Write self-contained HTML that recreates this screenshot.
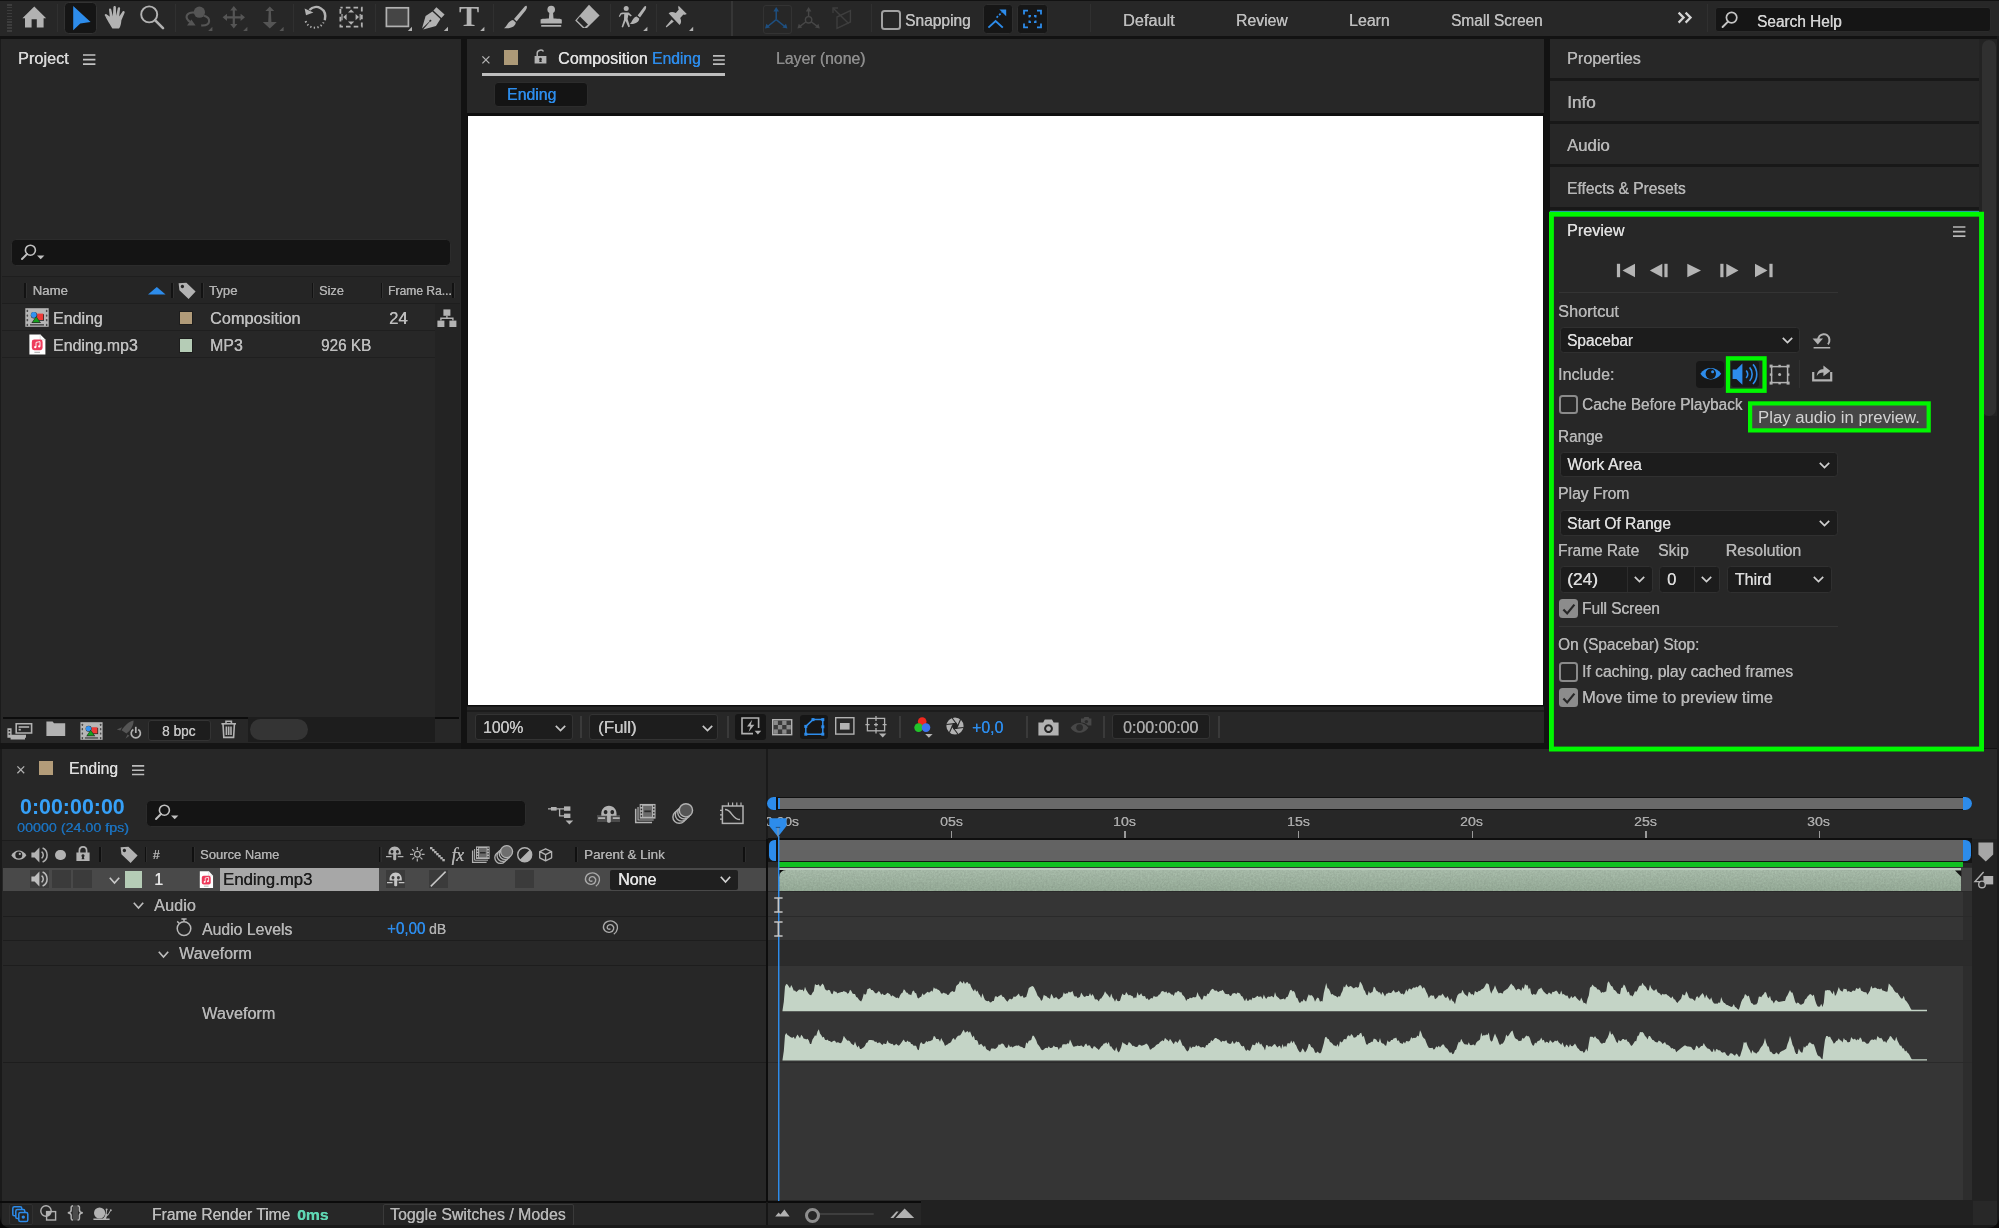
<!DOCTYPE html>
<html><head><meta charset="utf-8"><title>After Effects - Ending</title>
<style>
html,body{margin:0;padding:0;background:#272727;}
body{width:1999px;height:1228px;position:relative;overflow:hidden;font-family:"Liberation Sans",sans-serif;}
div,span.t,svg{position:absolute;box-sizing:border-box;}
span.t{white-space:pre;text-shadow:0.35px 0 0 currentColor;}
svg{overflow:visible;}
#root{left:0;top:0;width:1999px;height:1228px;will-change:transform;}
</style></head><body><div id="root">
<div style="left:0px;top:0px;width:1999px;height:1228px;background:#121212;"></div>
<div style="left:0px;top:1px;width:1999px;height:35px;background:#272727;"></div>
<div style="left:1px;top:39px;width:460px;height:704px;background:#272727;"></div>
<div style="left:467px;top:39px;width:1077px;height:704px;background:#272727;"></div>
<div style="left:1550px;top:39px;width:449px;height:709px;background:#272727;"></div>
<div style="left:0px;top:749px;width:1999px;height:479px;background:#272727;"></div>
<div style="left:1979px;top:39px;width:20px;height:709px;background:#232323;"></div>
<div style="left:1982px;top:40px;width:13.5px;height:376px;background:#303030;border-radius:7px;"></div>
<div style="left:1984px;top:416px;width:15px;height:332px;background:#1e1e1e;"></div>
<div style="left:1550px;top:78px;width:429px;height:3px;background:#181818;"></div>
<div style="left:1550px;top:121px;width:429px;height:3px;background:#181818;"></div>
<div style="left:1550px;top:164px;width:429px;height:3px;background:#181818;"></div>
<div style="left:1550px;top:207px;width:429px;height:3px;background:#181818;"></div>
<div style="left:467px;top:113px;width:1077px;height:594px;background:#0e0e0e;"></div>
<div style="left:468px;top:116px;width:1075px;height:589px;background:#ffffff;"></div>
<div style="left:7px;top:4px;width:5px;height:1.6px;background:#3d3d3d;"></div>
<div style="left:7px;top:6.9px;width:5px;height:1.6px;background:#3d3d3d;"></div>
<div style="left:7px;top:9.8px;width:5px;height:1.6px;background:#3d3d3d;"></div>
<div style="left:7px;top:12.7px;width:5px;height:1.6px;background:#3d3d3d;"></div>
<div style="left:7px;top:15.6px;width:5px;height:1.6px;background:#3d3d3d;"></div>
<div style="left:7px;top:18.5px;width:5px;height:1.6px;background:#3d3d3d;"></div>
<div style="left:7px;top:21.4px;width:5px;height:1.6px;background:#3d3d3d;"></div>
<div style="left:7px;top:24.3px;width:5px;height:1.6px;background:#3d3d3d;"></div>
<div style="left:7px;top:27.2px;width:5px;height:1.6px;background:#3d3d3d;"></div>
<div style="left:7px;top:30.1px;width:5px;height:1.6px;background:#3d3d3d;"></div>
<div style="left:57px;top:4px;width:1px;height:28px;background:#303030;"></div>
<div style="left:175px;top:4px;width:1px;height:28px;background:#303030;"></div>
<div style="left:292.5px;top:4px;width:1px;height:28px;background:#303030;"></div>
<div style="left:374.5px;top:4px;width:1px;height:28px;background:#303030;"></div>
<div style="left:492.5px;top:4px;width:1px;height:28px;background:#303030;"></div>
<div style="left:609.5px;top:4px;width:1px;height:28px;background:#303030;"></div>
<div style="left:655.5px;top:4px;width:1px;height:28px;background:#303030;"></div>
<div style="left:871px;top:4px;width:1px;height:28px;background:#303030;"></div>
<div style="left:1090px;top:4px;width:1px;height:28px;background:#303030;"></div>
<div style="left:1707px;top:4px;width:1px;height:28px;background:#303030;"></div>
<div style="left:730.5px;top:1px;width:2.2px;height:35px;background:#363636;"></div>
<svg style="left:22px;top:5px;" width="25" height="24" viewBox="0 0 25 24"><path d="M12.3 1.6 L24.2 13.2 H21.6 V22.6 H14.8 V14.2 H9.6 V22.6 H3 V13.2 H0.4 Z" fill="#b2b2b2"/></svg>
<div style="left:63.6px;top:1.9px;width:33.4px;height:31.8px;background:#151515;border:1px solid #323232;border-radius:4.5px;"></div>
<svg style="left:64px;top:0px;" width="32" height="36" viewBox="0 0 32 36"><path d="M9.2 5.9 L26.6 22 L16.3 23.6 L9.2 30.3 Z" fill="#2d8ceb"/></svg>
<svg style="left:104px;top:5px;" width="24" height="25" viewBox="0 0 24 25"><g fill="#b2b2b2"><path d="M5.6 14.6 L1 10.8 C0.2 10 1.4 8.6 2.4 9.3 L7.2 12.6 Z"/>
<path d="M6.2 15.6 L5 4.6 C4.9 3.2 7 3 7.3 4.4 L8.8 11.2 L9.4 2.2 C9.5 0.6 11.8 0.6 11.9 2.2 L12.2 10.8 L13.8 3 C14.1 1.6 16.3 2 16.1 3.5 L15.2 11.6 L18.6 6.6 C19.4 5.4 21.2 6.5 20.6 7.8 L17.4 15.2 C17 19 16.6 21.6 15 23.6 H8.4 C7.4 21.6 4.6 17.8 1.2 11 L6 13.6 Z"/></g></svg>
<svg style="left:139px;top:4px;" width="26" height="26" viewBox="0 0 26 26"><circle cx="10.2" cy="10.4" r="8" fill="none" stroke="#b2b2b2" stroke-width="1.9"/><path d="M16 16.2 L24 24.2" stroke="#b2b2b2" stroke-width="2.6" stroke-linecap="round"/></svg>
<svg style="left:184px;top:5px;" width="30" height="28" viewBox="0 0 30 28"><circle cx="15.4" cy="7.2" r="5.6" fill="#555555"/>
<path d="M10.5 7.6 C3.5 6.6 0.6 11.6 4.2 15.4 L6 17" fill="none" stroke="#555555" stroke-width="2.1"/>
<path d="M3 20.4 L11.6 20.4 L7.4 14.4 Z" fill="#555555"/>
<path d="M19.6 10.6 C27.4 13 27.2 21 17.2 20.4" fill="none" stroke="#555555" stroke-width="2.1"/><path d="M28.4 21.8V26H24.2Z" fill="#555555"/></svg>
<svg style="left:222px;top:5px;" width="26" height="28" viewBox="0 0 26 28"><g fill="#555555"><path d="M11.8 1 L15.4 5.6 H12.9 V11.2 H18.6 V8.7 L23 12.3 L18.6 15.9 V13.4 H12.9 V19 H15.4 L11.8 23.6 L8.2 19 H10.7 V13.4 H5 V15.9 L0.6 12.3 L5 8.7 V11.2 H10.7 V5.6 H8.2 Z"/></g><path d="M25.4 21.8V26H21.2Z" fill="#555555"/></svg>
<svg style="left:260px;top:5px;" width="24" height="28" viewBox="0 0 24 28"><g fill="#555555"><path d="M9.8 1.6 L14.2 6 H10.9 L11.4 17 H16.8 L9.8 23.4 L2.8 17 H8.2 L8.7 6 H5.4 Z"/></g><path d="M23.6 21.8V26H19.400000000000002Z" fill="#555555"/></svg>
<svg style="left:303px;top:4px;" width="26" height="27" viewBox="0 0 26 27"><path d="M6.4 6 C13 -0.6 24.6 4.4 21.8 16.2" fill="none" stroke="#b2b2b2" stroke-width="2.4"/>
<path d="M1.6 4.4 L10.4 8.6 L3 11.2 Z" fill="#b2b2b2"/>
<path d="M2.6 17.2 C5.4 25.2 16.6 26 20.6 18.4" fill="none" stroke="#b2b2b2" stroke-width="2" stroke-dasharray="1.3 2.3"/></svg>
<svg style="left:339px;top:6px;" width="25" height="23" viewBox="0 0 25 23"><rect x="1.4" y="1.6" width="21.4" height="19" fill="none" stroke="#b2b2b2" stroke-width="1.8" stroke-dasharray="4.6 3.1" stroke-dashoffset="2.3"/>
<g fill="#b2b2b2"><path d="M12.1 3.4 L15.2 6.6 H9 Z"/><path d="M12.1 18.8 L15.2 15.6 H9 Z"/>
<path d="M2.4 8 H3.6 V14.2 H2.4 Z M4.2 11.1 L7.6 8 V14.2 Z"/><path d="M21.8 8 H20.6 V14.2 H21.8 Z M20 11.1 L16.6 8 V14.2 Z"/></g></svg>
<svg style="left:385px;top:6px;" width="28" height="26" viewBox="0 0 28 26"><rect x="1.4" y="1.8" width="22" height="18.6" fill="#454545" stroke="#b2b2b2" stroke-width="1.7"/><path d="M27 20.8V25H22.8Z" fill="#b2b2b2"/></svg>
<svg style="left:421px;top:5px;" width="28" height="28" viewBox="0 0 28 28"><g fill="#b2b2b2"><path d="M15.4 2.2 L23.6 9.6 L20.4 13 L12.4 5.6 Z"/>
<path d="M11.4 6.6 L19.4 14 L15 21 L2.2 24.4 L9 16.6 C10.2 17 11 15.4 9.8 14.8 C8.6 14.4 8 16 8.4 16.4 L1 23.4 L4.6 11 Z"/></g><path d="M27 21.8V26H22.8Z" fill="#b2b2b2"/></svg>
<span class="t" style="left:458.6px;top:0.2px;font-family:'Liberation Serif',serif;font-weight:bold;font-size:28.6px;line-height:34px;color:#b2b2b2;transform:scaleX(1.06);transform-origin:0 0;text-shadow:none;">T</span>
<svg style="left:458px;top:6px;" width="27" height="27" viewBox="0 0 27 27"><path d="M26.4 20.8V25H22.2Z" fill="#b2b2b2"/></svg>
<svg style="left:503px;top:5px;" width="26" height="25" viewBox="0 0 26 25"><g fill="#b2b2b2"><path d="M23.4 0.8 C24.4 1.6 24 3.4 22.6 5.6 L13.6 16.4 L11 14 L20 3.4 C21.4 1.8 22.6 0.4 23.4 0.8 Z"/>
<path d="M10 15 L12.8 17.6 C12.4 21.6 8 24 1 23.2 C4.4 21.4 4.2 16.4 10 15 Z"/></g></svg>
<svg style="left:539px;top:5px;" width="25" height="24" viewBox="0 0 25 24"><g fill="#b2b2b2"><circle cx="12.2" cy="4.6" r="3.8"/><path d="M10.4 7 H14 L14.6 14.4 H9.8 Z"/>
<path d="M1.6 14.6 C4 13.4 8 13.8 10 13.6 H14.4 C16.4 13.8 20.4 13.4 22.8 14.6 V18.6 H1.6 Z"/><rect x="2.2" y="20" width="20" height="1.7"/></g></svg>
<svg style="left:574px;top:4px;" width="27" height="26" viewBox="0 0 27 26"><path d="M15 0.8 L25.6 11.4 L13 24 H8.8 L1.2 16.4 Z" fill="#b2b2b2"/>
<path d="M6 12.6 L14 20.6 L10.4 23.6 L2.9 16.2 Z" fill="#272727"/></svg>
<svg style="left:618px;top:5px;" width="31" height="28" viewBox="0 0 31 28"><g fill="#b2b2b2"><circle cx="8.2" cy="3.6" r="2.5"/>
<path d="M4.6 7.4 H10.6 L13.8 10.4 L12.8 11.6 L10.4 9.8 L9.6 14 L12 21.6 L10.4 22.2 L7.6 16 L5 22.6 L3.6 22 L6 14.4 L6.2 9 L3.2 9.6 L1.8 12 L0.8 11.2 L2.6 8 Z"/>
<path d="M27.6 1 C28.6 1.6 28.2 3.2 27.4 4.8 L22 12.4 L19.6 10.6 L25.2 3 C26 1.8 27 0.8 27.6 1 Z"/>
<path d="M18.6 11.4 L21.2 13.4 C21.6 16.6 17 19.6 11.6 18.8 C14.8 17 14 12.6 18.6 11.4 Z"/></g><path d="M29.4 21.8V26H25.2Z" fill="#b2b2b2"/></svg>
<svg style="left:665px;top:5px;" width="29" height="28" viewBox="0 0 29 28"><g fill="#b2b2b2"><path d="M13.6 0.8 L21.8 9 C20.4 9.8 19.2 9.8 18.4 9.4 L15.2 13 C16.6 15.6 16.4 18 14.6 20 L3.6 8.2 C5.8 6.6 8.2 6.8 10.8 8 L13.8 4.6 C13.2 3.4 13 2.2 13.6 0.8 Z"/>
<path d="M6.6 14.4 L8.8 16.6 L1.4 22.4 L0.8 21.6 Z"/></g><path d="M28.2 21.8V26H24.0Z" fill="#b2b2b2"/></svg>
<div style="left:762.5px;top:4.5px;width:29.5px;height:29px;border:1px solid #333333;border-radius:3px;"></div>
<svg style="left:762px;top:3px;" width="30" height="32" viewBox="0 0 30 32"><g stroke="#1e4f80" stroke-width="1.5" fill="none"><path d="M14.2 16.6 V7"/><path d="M14.2 16.6 L5 24"/><path d="M14.2 16.6 L23.4 24"/></g>
<g fill="#1e4f80"><path d="M14.2 4 L17 8.4 H11.4 Z"/><path d="M3 25.6 L4.4 20.8 L8 24.6 Z"/><path d="M25.4 25.6 L24 20.8 L20.4 24.6 Z"/></g></svg>
<svg style="left:794px;top:3px;" width="30" height="32" viewBox="0 0 30 32"><g stroke="#474747" stroke-width="1.4" fill="none"><circle cx="14.6" cy="16.8" r="3.2"/><path d="M14.6 13.4 V7"/><path d="M12 18.8 L5.6 23.6"/><path d="M17.2 18.8 L23.6 23.6"/></g>
<g fill="#474747"><path d="M14.6 4 L17.4 8.4 H11.8 Z"/><path d="M3.4 25.4 L4.8 20.8 L8.2 24.4 Z"/><path d="M25.8 25.4 L24.4 20.8 L21 24.4 Z"/></g></svg>
<svg style="left:828px;top:3px;" width="30" height="32" viewBox="0 0 30 32"><g stroke="#3e3e3e" stroke-width="1.4" fill="none"><path d="M9 14 L22.4 7.6 V19 L9 25.4 Z"/><path d="M5.4 5.4 L20.6 20.6"/><path d="M5 10 V5 H10"/></g></svg>
<div style="left:881px;top:10px;width:20px;height:20px;border:2px solid #a2a2a2;border-radius:3.5px;"></div>
<span class="t" style="left:905.04px;top:10.68px;font-size:16px;line-height:20px;color:#c0c0c0;transform:scaleX(0.9701);transform-origin:0 0;">Snapping</span>
<div style="left:982.6px;top:3.8px;width:30.8px;height:30.6px;background:#161616;border:1px solid #2e2e2e;border-radius:3.5px;"></div>
<svg style="left:983px;top:4px;" width="30" height="30" viewBox="0 0 30 30"><path d="M5.4 23.6 L12.6 17 L19.8 23.6" fill="none" stroke="#2d8ceb" stroke-width="1.9"/>
<path d="M13.6 13.6 L19 8.2" stroke="#2d8ceb" stroke-width="1.7" stroke-dasharray="2 1.6"/><path d="M16.4 5.4 H23.2 V12.2 Z" fill="#2d8ceb"/></svg>
<div style="left:1016.8px;top:3.8px;width:30.8px;height:30.6px;background:#161616;border:1px solid #2e2e2e;border-radius:3.5px;"></div>
<svg style="left:1017px;top:4px;" width="30" height="30" viewBox="0 0 30 30"><g fill="none" stroke="#2d8ceb" stroke-width="1.8"><path d="M7 10.6 V6.6 H11"/><path d="M24 10.6 V6.6 H20"/><path d="M7 19.4 V23.4 H11"/><path d="M24 19.4 V23.4 H20"/>
<path d="M12.4 13.4 V11.8 H14"/><path d="M18.6 13.4 V11.8 H17"/><path d="M12.4 16.6 V18.2 H14"/><path d="M18.6 16.6 V18.2 H17"/></g></svg>
<span class="t" style="left:1123.04px;top:10.68px;font-size:16px;line-height:20px;color:#bdbdbd;transform:scaleX(1.0178);transform-origin:0 0;">Default</span>
<span class="t" style="left:1236.04px;top:10.68px;font-size:16px;line-height:20px;color:#bdbdbd;transform:scaleX(0.9836);transform-origin:0 0;">Review</span>
<span class="t" style="left:1349.04px;top:10.68px;font-size:16px;line-height:20px;color:#bdbdbd;transform:scaleX(0.9921);transform-origin:0 0;">Learn</span>
<span class="t" style="left:1451.04px;top:10.68px;font-size:16px;line-height:20px;color:#bdbdbd;transform:scaleX(0.9627);transform-origin:0 0;">Small Screen</span>
<svg style="left:1677px;top:11px;" width="18" height="14" viewBox="0 0 18 14"><path d="M1.6 1.6 L6.6 6.6 L1.6 11.6 M8.6 1.6 L13.6 6.6 L8.6 11.6" fill="none" stroke="#d4d4d4" stroke-width="2.2"/></svg>
<div style="left:1714.5px;top:6.5px;width:276px;height:25px;background:#151515;border-radius:3px;border:1px solid #2a2a2a;"></div>
<svg style="left:1721px;top:11px;" width="18" height="18" viewBox="0 0 18 18"><circle cx="10.6" cy="6.6" r="5.2" fill="none" stroke="#c4c4c4" stroke-width="1.7"/><path d="M7 10.6 L1.6 16" stroke="#c4c4c4" stroke-width="2" stroke-linecap="round"/></svg>
<span class="t" style="left:1757.04px;top:11.68px;font-size:16px;line-height:20px;color:#d2d2d2;transform:scaleX(0.9608);transform-origin:0 0;">Search Help</span>
<div style="left:0px;top:39px;width:1.2px;height:704px;background:#1b1b1b;"></div>
<span class="t" style="left:18.04px;top:49.18px;font-size:16px;line-height:20px;color:#d9d9d9;transform:scaleX(1.0161);transform-origin:0 0;">Project</span>
<svg style="left:83px;top:54px;" width="13" height="12" viewBox="0 0 13 12"><path d="M0 1 H12.4 M0 5.6 H12.4 M0 10.2 H12.4" stroke="#c2c2c2" stroke-width="1.7" fill="none"/></svg>
<div style="left:10.8px;top:238.6px;width:440.4px;height:27.8px;background:#141414;border-radius:4.5px;border:1px solid #2c2c2c;"></div>
<svg style="left:20.7px;top:243.8px;" width="25" height="17" viewBox="0 0 25 17"><circle cx="9.4" cy="6.2" r="5" fill="none" stroke="#c0c0c0" stroke-width="1.6"/><path d="M6 10 L1 15" stroke="#c0c0c0" stroke-width="1.9" stroke-linecap="round"/><path d="M16 11.6 H23.4 L19.7 15.2 Z" fill="#c0c0c0"/></svg>
<div style="left:2px;top:276.5px;width:458px;height:27px;background:#252525;"></div>
<div style="left:2px;top:276px;width:458px;height:1px;background:#1e1e1e;"></div>
<div style="left:2px;top:303px;width:458px;height:1px;background:#1e1e1e;"></div>
<div style="left:24px;top:283px;width:1.6px;height:15px;background:#121212;"></div>
<div style="left:25.6px;top:283px;width:1px;height:15px;background:#303030;"></div>
<div style="left:171px;top:283px;width:1.6px;height:15px;background:#121212;"></div>
<div style="left:172.6px;top:283px;width:1px;height:15px;background:#303030;"></div>
<div style="left:201px;top:283px;width:1.6px;height:15px;background:#121212;"></div>
<div style="left:202.6px;top:283px;width:1px;height:15px;background:#303030;"></div>
<div style="left:311.5px;top:283px;width:1.6px;height:15px;background:#121212;"></div>
<div style="left:313.1px;top:283px;width:1px;height:15px;background:#303030;"></div>
<div style="left:380.5px;top:283px;width:1.6px;height:15px;background:#121212;"></div>
<div style="left:382.1px;top:283px;width:1px;height:15px;background:#303030;"></div>
<div style="left:452px;top:283px;width:1.6px;height:15px;background:#121212;"></div>
<div style="left:453.6px;top:283px;width:1px;height:15px;background:#303030;"></div>
<span class="t" style="left:32.608px;top:281.35px;font-size:13.2px;line-height:20px;color:#b0b0b0;">Name</span>
<svg style="left:147.5px;top:287px;" width="18" height="8" viewBox="0 0 18 8"><path d="M0 7.6 L8.8 0 L17.6 7.6 Z" fill="#2d8ceb"/></svg>
<svg style="left:178px;top:281.5px;" width="18" height="18" viewBox="0 0 18 18"><path d="M0.6 1.2 L1.4 8.2 L10.6 17 L17.6 9.6 L8.4 0.8 Z M4.4 2.8 A1.7 1.7 0 1 1 4.39 2.8 Z" fill="#b2b2b2" fill-rule="evenodd"/></svg>
<span class="t" style="left:209.208px;top:281.35px;font-size:13.2px;line-height:20px;color:#b0b0b0;transform:scaleX(0.9896);transform-origin:0 0;">Type</span>
<span class="t" style="left:319.008px;top:281.35px;font-size:13.2px;line-height:20px;color:#b0b0b0;transform:scaleX(0.9626);transform-origin:0 0;">Size</span>
<span class="t" style="left:388.208px;top:281.35px;font-size:13.2px;line-height:20px;color:#b0b0b0;transform:scaleX(0.9144);transform-origin:0 0;">Frame Ra...</span>
<div style="left:2px;top:330px;width:433px;height:1px;background:#1f1f1f;"></div>
<div style="left:2px;top:357px;width:433px;height:1px;background:#1f1f1f;"></div>
<div style="left:434.6px;top:304px;width:25px;height:413.4px;background:#232323;"></div>
<svg style="left:25.3px;top:308.3px;" width="24" height="19" viewBox="0 0 24 19"><rect x="0.3" y="0.2" width="23.4" height="18.6" fill="#b6b6b6"/><rect x="1.6" y="1.8" width="1.5" height="2.3" rx="0.6" fill="#4a4a4a"/><rect x="20.9" y="1.8" width="1.5" height="2.3" rx="0.6" fill="#4a4a4a"/><rect x="1.6" y="6.4" width="1.5" height="2.3" rx="0.6" fill="#4a4a4a"/><rect x="20.9" y="6.4" width="1.5" height="2.3" rx="0.6" fill="#4a4a4a"/><rect x="1.6" y="11" width="1.5" height="2.3" rx="0.6" fill="#4a4a4a"/><rect x="20.9" y="11" width="1.5" height="2.3" rx="0.6" fill="#4a4a4a"/><rect x="1.6" y="15.8" width="1.5" height="2.3" rx="0.6" fill="#4a4a4a"/><rect x="20.9" y="15.8" width="1.5" height="2.3" rx="0.6" fill="#4a4a4a"/><rect x="5" y="16.2" width="14" height="1.3" fill="#3c3c3c"/><rect x="12.6" y="6.2" width="6.4" height="6.6" fill="#2a2a2a"/><rect x="12.2" y="5.6" width="6" height="6.4" fill="#ee3a36"/><circle cx="9" cy="7.2" r="3.2" fill="#2a2a2a"/><circle cx="8.8" cy="6.9" r="2.8" fill="#3292f0"/><path d="M11.2 8.2 L16 15 H6.4 Z" fill="#2a2a2a"/><path d="M11.2 9 L14.8 14.2 H7.6 Z" fill="#17a11f"/></svg>
<span class="t" style="left:52.94px;top:308.58px;font-size:16px;line-height:20px;color:#c0c0c0;transform:scaleX(0.9955);transform-origin:0 0;">Ending</span>
<div style="left:178.5px;top:310.5px;width:14.5px;height:14.5px;background:#b19b79;border:1px solid #1d1d1d;"></div>
<span class="t" style="left:210.04px;top:308.58px;font-size:16px;line-height:20px;color:#bebebe;transform:scaleX(1.0165);transform-origin:0 0;">Composition</span>
<span class="t" style="left:389.04px;top:308.58px;font-size:16px;line-height:20px;color:#bebebe;transform:scaleX(1.0451);transform-origin:0 0;">24</span>
<svg style="left:437px;top:308.5px;" width="20" height="19" viewBox="0 0 20 19"><g fill="#b2b2b2"><rect x="6.4" y="0.4" width="7" height="6.4"/><rect x="0.4" y="11.6" width="7" height="6.4"/><rect x="12.4" y="11.6" width="7" height="6.4"/><path d="M9.2 6.8 H10.6 V8.6 H16.6 V11.6 H15.2 V10 H4.6 V11.6 H3.2 V8.6 H9.2 Z"/></g></svg>
<svg style="left:28.6px;top:334px;" width="17" height="21" viewBox="0 0 17 21"><path d="M0.4 0.4 H11.4 L16.4 5.6 V20.6 H0.4 Z" fill="#ffffff"/><path d="M11.2 0.6 V5.8 H16.2" fill="none" stroke="#d0d0d0" stroke-width="0.7"/><rect x="2.8" y="5.6" width="10.8" height="10.6" rx="2.4" fill="#ee3b5b"/><path d="M7 13.2 V8.4 L11 7.6 V12.4" fill="none" stroke="#fff" stroke-width="0.9"/><circle cx="6.2" cy="13.2" r="1.1" fill="#fff"/><circle cx="10.2" cy="12.4" r="1.1" fill="#fff"/><rect x="5.4" y="17.8" width="5.6" height="0.9" fill="#999"/></svg>
<span class="t" style="left:52.94px;top:336.18px;font-size:16px;line-height:20px;color:#c0c0c0;transform:scaleX(0.9907);transform-origin:0 0;">Ending.mp3</span>
<div style="left:178.5px;top:338px;width:14.5px;height:14.5px;background:#b5ccb6;border:1px solid #1d1d1d;"></div>
<span class="t" style="left:210.04px;top:336.18px;font-size:16px;line-height:20px;color:#bebebe;transform:scaleX(0.9909);transform-origin:0 0;">MP3</span>
<span class="t" style="left:320.64px;top:336.18px;font-size:16px;line-height:20px;color:#bebebe;transform:scaleX(0.9564);transform-origin:0 0;">926 KB</span>
<div style="left:3px;top:717.3px;width:245px;height:1.6px;background:#0c0c0c;"></div>
<div style="left:434.6px;top:717.3px;width:24.6px;height:1.6px;background:#0c0c0c;"></div>
<div style="left:248px;top:717.4px;width:186.6px;height:24.2px;background:#1d1d1d;"></div>
<div style="left:0px;top:743px;width:461px;height:6px;background:#151515;"></div>
<svg style="left:6.5px;top:722.5px;" width="26" height="17" viewBox="0 0 26 17"><g fill="#b2b2b2"><path d="M8.4 0 H25.4 V10.8 H8.4 Z M10 1.6 V9.2 H23.8 V1.6 Z" fill-rule="evenodd"/><rect x="11.6" y="3.2" width="10.6" height="1.6"/><rect x="11.6" y="5.8" width="2.2" height="1.8"/><path d="M0.4 5.2 H4.6 V11.8 H19 V14.8 H18 V16.4 H3.6 V14.8 H0.4 Z M1.6 7 V8.6 H3.2 V7 Z M1.6 10.2 V11.8 H3.2 V10.2 Z" fill-rule="evenodd"/></g></svg>
<svg style="left:45.5px;top:721px;" width="20" height="16" viewBox="0 0 20 16"><path d="M0.4 0.6 H6.6 L8 2.2 H19.2 V15 H0.4 Z" fill="#b2b2b2"/></svg>
<svg style="left:78.8px;top:721.6px;" width="25" height="18" viewBox="0 0 24 19"><rect x="0.3" y="0.2" width="23.4" height="18.6" fill="#b6b6b6"/><rect x="1.6" y="1.8" width="1.5" height="2.3" rx="0.6" fill="#4a4a4a"/><rect x="20.9" y="1.8" width="1.5" height="2.3" rx="0.6" fill="#4a4a4a"/><rect x="1.6" y="6.4" width="1.5" height="2.3" rx="0.6" fill="#4a4a4a"/><rect x="20.9" y="6.4" width="1.5" height="2.3" rx="0.6" fill="#4a4a4a"/><rect x="1.6" y="11" width="1.5" height="2.3" rx="0.6" fill="#4a4a4a"/><rect x="20.9" y="11" width="1.5" height="2.3" rx="0.6" fill="#4a4a4a"/><rect x="1.6" y="15.8" width="1.5" height="2.3" rx="0.6" fill="#4a4a4a"/><rect x="20.9" y="15.8" width="1.5" height="2.3" rx="0.6" fill="#4a4a4a"/><rect x="5" y="16.2" width="14" height="1.3" fill="#3c3c3c"/><rect x="12.6" y="6.2" width="6.4" height="6.6" fill="#2a2a2a"/><rect x="12.2" y="5.6" width="6" height="6.4" fill="#ee3a36"/><circle cx="9" cy="7.2" r="3.2" fill="#2a2a2a"/><circle cx="8.8" cy="6.9" r="2.8" fill="#3292f0"/><path d="M11.2 8.2 L16 15 H6.4 Z" fill="#2a2a2a"/><path d="M11.2 9 L14.8 14.2 H7.6 Z" fill="#17a11f"/></svg>
<svg style="left:116px;top:720px;" width="26" height="20" viewBox="0 0 26 20"><g fill="#555"><path d="M17.6 0.4 C13 1.6 8.4 5.4 5.6 10.2 L10.4 13.6 C14.6 10.2 17.6 5.6 17.6 0.4 Z"/><path d="M6 7.2 L0.8 9.4 L4.4 10.4 Z"/><path d="M11.6 14.6 L9.4 18.8 L13.4 15.8 Z"/></g><g fill="none" stroke="#b2b2b2" stroke-width="1.7"><path d="M17.4 9.4 A4.6 4.6 0 1 0 22.2 9.4"/><path d="M19.8 6.8 V13"/></g></svg>
<div style="left:147.5px;top:720px;width:63.5px;height:21px;background:#1d1d1d;border:1px solid #333;border-radius:3px;"></div>
<span class="t" style="left:162.46px;top:721.36px;font-size:14px;line-height:20px;color:#c2c2c2;transform:scaleX(0.9752);transform-origin:0 0;">8 bpc</span>
<svg style="left:221px;top:720px;" width="16" height="19" viewBox="0 0 16 19"><g fill="none" stroke="#b2b2b2" stroke-width="1.6"><path d="M0.4 3.8 H15"/><path d="M5 3.4 V1.2 H10.4 V3.4"/><path d="M2 4 L2.8 17.4 H12.6 L13.4 4"/><path d="M5.4 6.4 V15 M7.7 6.4 V15 M10 6.4 V15"/></g></svg>
<div style="left:250px;top:719px;width:58.4px;height:21.4px;background:#343434;border-radius:11px;"></div>
<svg style="left:482px;top:55.5px;" width="8" height="8" viewBox="0 0 8 8"><path d="M0.4 0.4 L7.4 7.4 M7.4 0.4 L0.4 7.4" stroke="#b4b4b4" stroke-width="1.3"/></svg>
<div style="left:503.7px;top:50.2px;width:14.5px;height:14.5px;background:#ad9a78;"></div>
<svg style="left:533.5px;top:48.5px;" width="13" height="15" viewBox="0 0 13 15"><path d="M3.2 7.4 V4.2 C3.2 0.6 8.6 0.2 9.4 2.6" fill="none" stroke="#b2b2b2" stroke-width="1.5"/><path d="M0.6 7 H12.4 V14.6 H0.6 Z M6.5 8.8 A1.5 1.5 0 0 0 5.6 11.4 L5.2 13 H7.8 L7.4 11.4 A1.5 1.5 0 0 0 6.5 8.8 Z" fill="#b2b2b2" fill-rule="evenodd"/></svg>
<span class="t" style="left:557.74px;top:48.88px;font-size:16px;line-height:20px;color:#e2e2e2;transform:scaleX(1.0075);transform-origin:0 0;">Composition</span>
<span class="t" style="left:651.74px;top:48.88px;font-size:16px;line-height:20px;color:#2d8ceb;transform:scaleX(0.9755);transform-origin:0 0;">Ending</span>
<svg style="left:713px;top:54.8px;" width="12" height="11" viewBox="0 0 12 11"><path d="M0 0.9 H11.8 M0 5 H11.8 M0 9.1 H11.8" stroke="#bcbcbc" stroke-width="1.6" fill="none"/></svg>
<div style="left:482px;top:73.2px;width:243px;height:2.8px;background:#bebebe;"></div>
<span class="t" style="left:776.24px;top:48.88px;font-size:16px;line-height:20px;color:#8c8c8c;transform:scaleX(0.9843);transform-origin:0 0;">Layer (none)</span>
<div style="left:494.2px;top:82.2px;width:93.4px;height:25px;background:#141414;border-radius:4px;border:1px solid #2c2c2c;"></div>
<span class="t" style="left:507.04px;top:84.68px;font-size:16px;line-height:20px;color:#2d8ceb;transform:scaleX(0.9875);transform-origin:0 0;">Ending</span>
<div style="left:467px;top:705.6px;width:1077px;height:1.2px;background:#1a1a1a;"></div>
<div style="left:467px;top:710.4px;width:1077px;height:1.3px;background:#1c1c1c;"></div>
<div style="left:580.3px;top:715.5px;width:2px;height:22px;background:#3a3a3a;"></div>
<div style="left:727.3px;top:715.5px;width:2px;height:22px;background:#3a3a3a;"></div>
<div style="left:899px;top:715.5px;width:2px;height:22px;background:#3a3a3a;"></div>
<div style="left:1026px;top:715.5px;width:2px;height:22px;background:#3a3a3a;"></div>
<div style="left:1103.3px;top:715.5px;width:2px;height:22px;background:#3a3a3a;"></div>
<div style="left:1218px;top:715.5px;width:2px;height:22px;background:#3a3a3a;"></div>
<div style="left:474.7px;top:714.3px;width:98px;height:25.3px;background:#1d1d1d;border:1px solid #333;border-radius:3px;"></div>
<span class="t" style="left:483.44px;top:717.68px;font-size:16px;line-height:20px;color:#c6c6c6;transform:scaleX(0.9823);transform-origin:0 0;">100%</span>
<svg style="left:554.5px;top:724.5px;" width="12" height="7" viewBox="0 0 12 7"><path d="M0.8 0.8 L5.5 5.5 L10.2 0.8" fill="none" stroke="#c6c6c6" stroke-width="1.7"/></svg>
<div style="left:589.4px;top:714.3px;width:129px;height:25.3px;background:#1d1d1d;border:1px solid #333;border-radius:3px;"></div>
<span class="t" style="left:597.74px;top:717.68px;font-size:16px;line-height:20px;color:#c6c6c6;transform:scaleX(1.0565);transform-origin:0 0;">(Full)</span>
<svg style="left:701.5px;top:724.5px;" width="12" height="7" viewBox="0 0 12 7"><path d="M0.8 0.8 L5.5 5.5 L10.2 0.8" fill="none" stroke="#c6c6c6" stroke-width="1.7"/></svg>
<div style="left:735.2px;top:713.7px;width:30.6px;height:26.1px;background:#161616;border-radius:3px;"></div>
<svg style="left:740.5px;top:717px;" width="21" height="19" viewBox="0 0 21 19"><path d="M17.6 11 V1 H1 V16.6 H12" fill="none" stroke="#b2b2b2" stroke-width="1.6"/><path d="M11.2 2.8 L6 9.6 H9.4 L7.6 15 L13.4 7.8 H9.8 Z" fill="#b2b2b2"/><path d="M13.6 13.8 H20.2 L16.9 17.4 Z" fill="#b2b2b2"/></svg>
<svg style="left:771.8px;top:718.8px;" width="21" height="17" viewBox="0 0 21 17"><rect x="0.7" y="0.7" width="19" height="15" fill="#3a3a3a" stroke="#b2b2b2" stroke-width="1.4"/><rect x="1.6" y="1.6" width="4.3" height="4.4" fill="#8a8a8a"/><rect x="10.2" y="1.6" width="4.3" height="4.4" fill="#8a8a8a"/><rect x="5.9" y="6" width="4.3" height="4.4" fill="#8a8a8a"/><rect x="14.5" y="6" width="4.3" height="4.4" fill="#8a8a8a"/><rect x="1.6" y="10.4" width="4.3" height="4.4" fill="#8a8a8a"/><rect x="10.2" y="10.4" width="4.3" height="4.4" fill="#8a8a8a"/></svg>
<div style="left:799.6px;top:714.8px;width:28.2px;height:24px;background:#161616;border-radius:3px;"></div>
<svg style="left:803.6px;top:717.6px;" width="21" height="18" viewBox="0 0 21 18"><path d="M1.8 16.2 V8.4 L9 1.6 H18.8 V16.2 Z" fill="none" stroke="#2d8ceb" stroke-width="1.5"/><rect x="0.3" y="14.7" width="3" height="3" fill="#2d8ceb"/><rect x="0.3" y="6.9" width="3" height="3" fill="#2d8ceb"/><rect x="7.5" y="0.1" width="3" height="3" fill="#2d8ceb"/><rect x="17.3" y="0.1" width="3" height="3" fill="#2d8ceb"/><rect x="17.3" y="7.3" width="3" height="3" fill="#2d8ceb"/><rect x="17.3" y="14.7" width="3" height="3" fill="#2d8ceb"/></svg>
<svg style="left:835.3px;top:717.3px;" width="20" height="18" viewBox="0 0 20 18"><rect x="0.7" y="0.7" width="18.2" height="16.4" fill="none" stroke="#b2b2b2" stroke-width="1.4"/><rect x="5" y="6" width="9.6" height="6.6" fill="#b2b2b2"/></svg>
<svg style="left:865px;top:716px;" width="23" height="22" viewBox="0 0 23 22"><g fill="none" stroke="#b2b2b2" stroke-width="1.3"><rect x="2.4" y="2.4" width="17.2" height="12.4"/><path d="M11 0 V5 M11 12 V17.6 M0.4 8.6 H4.6 M17.6 8.6 H21.6 M9 8.6 H13 M11 6.8 V10.4"/></g><path d="M14 17.6 H21.4 L17.7 21.4 Z" fill="#b2b2b2"/></svg>
<svg style="left:913.5px;top:716.6px;" width="20" height="22" viewBox="0 0 20 22"><circle cx="8.2" cy="4.6" r="4.3" fill="#f0281e"/><circle cx="4.6" cy="10.6" r="4.3" fill="#22c32a"/><circle cx="12" cy="10.6" r="4.3" fill="#3d74ee"/><path d="M11.2 17 H18.6 L14.9 20.8 Z" fill="#b2b2b2"/></svg>
<svg style="left:945.5px;top:717.2px;" width="18" height="18" viewBox="0 0 18 18"><circle cx="9" cy="9" r="8.6" fill="#b2b2b2"/><path d="M17.67 10.53 L7.16 11.62" stroke="#272727" stroke-width="1.1"/><path d="M12.01 17.27 L5.81 8.72" stroke="#272727" stroke-width="1.1"/><path d="M3.34 15.74 L7.65 6.10" stroke="#272727" stroke-width="1.1"/><path d="M0.33 7.47 L10.84 6.38" stroke="#272727" stroke-width="1.1"/><path d="M5.99 0.73 L12.19 9.28" stroke="#272727" stroke-width="1.1"/><path d="M14.66 2.26 L10.35 11.90" stroke="#272727" stroke-width="1.1"/><circle cx="9" cy="9" r="2.6" fill="#272727"/></svg>
<span class="t" style="left:972.44px;top:718.18px;font-size:16px;line-height:20px;color:#2d8ceb;transform:scaleX(0.9878);transform-origin:0 0;">+0,0</span>
<svg style="left:1038.3px;top:718.6px;" width="21" height="17" viewBox="0 0 21 17"><path d="M0.4 3.4 H5.2 L6.8 0.6 H14 L15.6 3.4 H20.6 V16.4 H0.4 Z M10.5 5.2 A4.4 4.4 0 1 0 10.51 5.2 Z M10.5 7.2 A2.4 2.4 0 1 1 10.49 7.2 Z" fill="#b2b2b2" fill-rule="evenodd"/></svg>
<svg style="left:1069.5px;top:716.2px;" width="22" height="19" viewBox="0 0 22 19"><path d="M0.6 11.8 C4.6 5.4 14 5.4 18.4 11.8 C14 18.4 4.6 18.4 0.6 11.8 Z" fill="#474747"/><circle cx="9.6" cy="11.6" r="3.4" fill="#2b2b2b"/><path d="M11 2.6 H13.6 L14.4 1 H18.6 L19.4 2.6 H21.4 V9.6 H18 C16.4 7.6 13.8 6.4 11 6.4 Z" fill="#474747"/><circle cx="16.4" cy="5.6" r="1.7" fill="#2b2b2b"/></svg>
<div style="left:1111.9px;top:714.3px;width:98.4px;height:25px;background:#1d1d1d;border:1px solid #333;border-radius:3px;"></div>
<span class="t" style="left:1123.34px;top:717.68px;font-size:16px;line-height:20px;color:#a8a8a8;transform:scaleX(0.9944);transform-origin:0 0;">0:00:00:00</span>
<span class="t" style="left:1567.04px;top:49.48px;font-size:16px;line-height:20px;color:#b6b6b6;transform:scaleX(1.0093);transform-origin:0 0;">Properties</span>
<span class="t" style="left:1567.04px;top:92.58px;font-size:16px;line-height:20px;color:#b6b6b6;transform:scaleX(1.0717);transform-origin:0 0;">Info</span>
<span class="t" style="left:1567.04px;top:135.58px;font-size:16px;line-height:20px;color:#b6b6b6;transform:scaleX(1.0410);transform-origin:0 0;">Audio</span>
<span class="t" style="left:1567.04px;top:178.58px;font-size:16px;line-height:20px;color:#b6b6b6;transform:scaleX(0.9688);transform-origin:0 0;">Effects &amp; Presets</span>
<span class="t" style="left:1567.04px;top:221.18px;font-size:16px;line-height:20px;color:#dedede;transform:scaleX(1.0069);transform-origin:0 0;">Preview</span>
<svg style="left:1953px;top:226px;" width="13" height="12" viewBox="0 0 13 12"><path d="M0 1 H12.4 M0 5.6 H12.4 M0 10.2 H12.4" stroke="#b8b8b8" stroke-width="1.7" fill="none"/></svg>
<svg style="left:0;top:0" width="1999" height="300" viewBox="0 0 1999 300"><rect x="1616.9" y="263.8" width="3.2" height="13.4" fill="#b4b4b4"/><path d="M1635 263.8 V277.2 L1622.5 270.5 Z" fill="#b4b4b4"/><path d="M1662.3 263.8 V277.2 L1649.8 270.5 Z" fill="#b4b4b4"/><rect x="1664.4" y="263.8" width="3.2" height="13.4" fill="#b4b4b4"/><path d="M1687.3 263.8 V277.2 L1701 270.5 Z" fill="#b4b4b4"/><rect x="1720.3" y="263.8" width="3.2" height="13.4" fill="#b4b4b4"/><path d="M1726.3 263.8 V277.2 L1738.5 270.5 Z" fill="#b4b4b4"/><path d="M1755 263.8 V277.2 L1767.5 270.5 Z" fill="#b4b4b4"/><rect x="1769.4" y="263.8" width="3.2" height="13.4" fill="#b4b4b4"/></svg>
<div style="left:1558.5px;top:292.2px;width:279.5px;height:1.2px;background:#343434;"></div>
<span class="t" style="left:1557.84px;top:301.58px;font-size:16px;line-height:20px;color:#b6b6b6;transform:scaleX(1.0203);transform-origin:0 0;">Shortcut</span>
<div style="left:1559.5px;top:326.6px;width:240.5px;height:26.4px;background:#1c1c1c;border:1px solid #303030;border-radius:3.5px;"></div>
<span class="t" style="left:1567.24px;top:330.58px;font-size:16px;line-height:20px;color:#dcdcdc;transform:scaleX(0.9621);transform-origin:0 0;">Spacebar</span>
<svg style="left:1781.5px;top:337px;" width="12" height="7" viewBox="0 0 12 7"><path d="M0.8 0.8 L5.5 5.5 L10.2 0.8" fill="none" stroke="#cfcfcf" stroke-width="1.7"/></svg>
<svg style="left:1812px;top:331px;" width="20" height="18" viewBox="0 0 20 18"><path d="M6.4 9.2 C5.6 2 16.6 0.6 17.4 8.6 C17.6 10.6 17 12.2 16 13.4" fill="none" stroke="#b2b2b2" stroke-width="2"/><path d="M0.6 7.6 H11 L5.8 13.6 Z" fill="#b2b2b2"/><rect x="1.6" y="16" width="16.6" height="1.5" fill="#b2b2b2"/></svg>
<span class="t" style="left:1557.84px;top:364.68px;font-size:16px;line-height:20px;color:#b6b6b6;transform:scaleX(1.0046);transform-origin:0 0;">Include:</span>
<div style="left:1696.3px;top:360.6px;width:28px;height:27px;background:#171717;border-radius:4px;"></div>
<svg style="left:1700px;top:366.4px;" width="22" height="16" viewBox="0 0 22 16"><path d="M0.4 7.8 C5 0.2 16.4 0.2 21.2 7.8 C16.4 15.4 5 15.4 0.4 7.8 Z" fill="#2d8ceb"/><circle cx="10.8" cy="7.8" r="5.2" fill="#171717"/><circle cx="12.6" cy="5.8" r="1.5" fill="#2d8ceb"/></svg>
<div style="left:1730.6px;top:361px;width:28.4px;height:25.8px;background:#181818;border-radius:3px;"></div>
<svg style="left:0;top:0" width="1999" height="800" viewBox="0 0 1999 800"><rect x="1728" y="358.35" width="36.55" height="32.4" fill="none" stroke="#00f700" stroke-width="4.3"/></svg>
<svg style="left:1731.5px;top:363.3px;" width="28" height="23" viewBox="0 0 28 23"><path d="M0.6 6.4 H4.4 L10.4 0.6 V21.8 L4.4 16 H0.6 Z" fill="#2d8ceb"/><g fill="none" stroke="#2d8ceb" stroke-width="1.6"><path d="M14.2 7.4 C16 9.6 16 12.8 14.2 15"/><path d="M17.6 4.4 C21 8.2 21 14.2 17.6 18"/><path d="M21 1.4 C26 6.8 26 15.6 21 21"/></g></svg>
<svg style="left:1768.6px;top:363.6px;" width="22" height="22" viewBox="0 0 22 22"><rect x="2.6" y="2.6" width="16" height="16" fill="none" stroke="#b2b2b2" stroke-width="1.5"/><g fill="#b2b2b2"><rect x="0.6" y="0.6" width="3" height="3"/><rect x="17.6" y="0.6" width="3" height="3"/><rect x="0.6" y="17.6" width="3" height="3"/><rect x="17.6" y="17.6" width="3" height="3"/><rect x="9.4" y="0.8" width="2.4" height="2.4"/><rect x="9.4" y="18" width="2.4" height="2.4"/><rect x="0.8" y="9.4" width="2.4" height="2.4"/><rect x="18" y="9.4" width="2.4" height="2.4"/><circle cx="10.6" cy="10.6" r="1.5"/></g></svg>
<div style="left:1799px;top:360px;width:1.2px;height:28px;background:#313131;"></div>
<svg style="left:1812.3px;top:365.2px;" width="21" height="17" viewBox="0 0 21 17"><path d="M1.2 7 V15.4 H19.2 V7" fill="none" stroke="#b2b2b2" stroke-width="2.2"/><path d="M4.8 11 C5 6 8 4.2 11.4 4.2 V0.6 L18.4 6 L11.4 11.2 V7.6 C8.4 7.6 6.4 8.4 4.8 11 Z" fill="#b2b2b2"/></svg>
<div style="left:1558.8px;top:394.8px;width:19.6px;height:19.6px;border:2px solid #8a8a8a;border-radius:3.5px;"></div>
<span class="t" style="left:1582.24px;top:394.78px;font-size:16px;line-height:20px;color:#b6b6b6;transform:scaleX(0.9593);transform-origin:0 0;">Cache Before Playback</span>
<div style="left:1750px;top:403.4px;width:178.8px;height:27px;background:#464646;"></div>
<svg style="left:0;top:0" width="1999" height="800" viewBox="0 0 1999 800"><rect x="1750.1" y="403.4" width="178.6" height="27" fill="none" stroke="#00f700" stroke-width="4.2"/></svg>
<span class="t" style="left:1758.06px;top:407.98px;font-size:15.6px;line-height:20px;color:#d2d2d2;transform:scaleX(1.0733);transform-origin:0 0;text-shadow:none;">Play audio in preview.</span>
<span class="t" style="left:1557.84px;top:426.68px;font-size:16px;line-height:20px;color:#b6b6b6;transform:scaleX(0.9502);transform-origin:0 0;">Range</span>
<div style="left:1559.5px;top:451.8px;width:278.5px;height:25.2px;background:#1c1c1c;border:1px solid #303030;border-radius:3.5px;"></div>
<span class="t" style="left:1567.24px;top:455.18px;font-size:16px;line-height:20px;color:#dcdcdc;">Work Area</span>
<svg style="left:1819px;top:461.6px;" width="12" height="7" viewBox="0 0 12 7"><path d="M0.8 0.8 L5.5 5.5 L10.2 0.8" fill="none" stroke="#cfcfcf" stroke-width="1.7"/></svg>
<span class="t" style="left:1557.84px;top:483.98px;font-size:16px;line-height:20px;color:#b6b6b6;transform:scaleX(0.9767);transform-origin:0 0;">Play From</span>
<div style="left:1559.5px;top:509.8px;width:278.5px;height:26.4px;background:#1c1c1c;border:1px solid #303030;border-radius:3.5px;"></div>
<span class="t" style="left:1567.24px;top:513.78px;font-size:16px;line-height:20px;color:#dcdcdc;transform:scaleX(0.9726);transform-origin:0 0;">Start Of Range</span>
<svg style="left:1819px;top:520.2px;" width="12" height="7" viewBox="0 0 12 7"><path d="M0.8 0.8 L5.5 5.5 L10.2 0.8" fill="none" stroke="#cfcfcf" stroke-width="1.7"/></svg>
<span class="t" style="left:1557.84px;top:541.38px;font-size:16px;line-height:20px;color:#b6b6b6;transform:scaleX(0.9601);transform-origin:0 0;">Frame Rate</span>
<span class="t" style="left:1657.94px;top:541.38px;font-size:16px;line-height:20px;color:#b6b6b6;transform:scaleX(0.9863);transform-origin:0 0;">Skip</span>
<span class="t" style="left:1725.54px;top:541.38px;font-size:16px;line-height:20px;color:#b6b6b6;">Resolution</span>
<div style="left:1559.5px;top:566px;width:93px;height:26.5px;background:#1c1c1c;border:1px solid #303030;border-radius:3.5px;"></div>
<div style="left:1626.6px;top:567px;width:1px;height:24.5px;background:#2c2c2c;"></div>
<span class="t" style="left:1567.24px;top:570.03px;font-size:16px;line-height:20px;color:#dcdcdc;transform:scaleX(1.0824);transform-origin:0 0;">(24)</span>
<svg style="left:1634px;top:576.45px;" width="12" height="7" viewBox="0 0 12 7"><path d="M0.8 0.8 L5.5 5.5 L10.2 0.8" fill="none" stroke="#cfcfcf" stroke-width="1.7"/></svg>
<div style="left:1659.4px;top:566px;width:60.2px;height:26.5px;background:#1c1c1c;border:1px solid #303030;border-radius:3.5px;"></div>
<div style="left:1693.8px;top:567px;width:1px;height:24.5px;background:#2c2c2c;"></div>
<span class="t" style="left:1667.14px;top:570.03px;font-size:16px;line-height:20px;color:#dcdcdc;transform:scaleX(1.0339);transform-origin:0 0;">0</span>
<svg style="left:1701px;top:576.45px;" width="12" height="7" viewBox="0 0 12 7"><path d="M0.8 0.8 L5.5 5.5 L10.2 0.8" fill="none" stroke="#cfcfcf" stroke-width="1.7"/></svg>
<div style="left:1727px;top:566px;width:104.6px;height:26.5px;background:#1c1c1c;border:1px solid #303030;border-radius:3.5px;"></div>
<span class="t" style="left:1734.74px;top:570.03px;font-size:16px;line-height:20px;color:#dcdcdc;">Third</span>
<svg style="left:1813px;top:576.45px;" width="12" height="7" viewBox="0 0 12 7"><path d="M0.8 0.8 L5.5 5.5 L10.2 0.8" fill="none" stroke="#cfcfcf" stroke-width="1.7"/></svg>
<div style="left:1558.8px;top:598.8px;width:19.6px;height:19.6px;background:#8c8c8c;border-radius:3.5px;"></div>
<svg style="left:1558.8px;top:598.8px;" width="20" height="20" viewBox="0 0 20 20"><path d="M4.4 10.4 L8.2 14.4 L15.4 5.6" fill="none" stroke="#262626" stroke-width="2.2"/></svg>
<span class="t" style="left:1582.24px;top:598.98px;font-size:16px;line-height:20px;color:#b6b6b6;transform:scaleX(0.9614);transform-origin:0 0;">Full Screen</span>
<div style="left:1558.5px;top:625.8px;width:279.5px;height:1.2px;background:#343434;"></div>
<span class="t" style="left:1557.84px;top:635.18px;font-size:16px;line-height:20px;color:#b6b6b6;transform:scaleX(0.9622);transform-origin:0 0;">On (Spacebar) Stop:</span>
<div style="left:1558.8px;top:662px;width:19.6px;height:19.6px;border:2px solid #8a8a8a;border-radius:3.5px;"></div>
<span class="t" style="left:1582.24px;top:661.98px;font-size:16px;line-height:20px;color:#b6b6b6;transform:scaleX(0.9763);transform-origin:0 0;">If caching, play cached frames</span>
<div style="left:1558.8px;top:687.8px;width:19.6px;height:19.6px;background:#8c8c8c;border-radius:3.5px;"></div>
<svg style="left:1558.8px;top:687.8px;" width="20" height="20" viewBox="0 0 20 20"><path d="M4.4 10.4 L8.2 14.4 L15.4 5.6" fill="none" stroke="#262626" stroke-width="2.2"/></svg>
<span class="t" style="left:1582.24px;top:687.98px;font-size:16px;line-height:20px;color:#b6b6b6;transform:scaleX(1.0267);transform-origin:0 0;">Move time to preview time</span>
<div style="left:1550px;top:210.7px;width:429px;height:1.1px;background:#2b86d9;"></div>
<svg style="left:0;top:0" width="1999" height="800" viewBox="0 0 1999 800"><rect x="1551.45" y="214.2" width="430.1" height="534.85" fill="none" stroke="#00f700" stroke-width="4.9"/></svg>
<div style="left:0px;top:749px;width:2px;height:479px;background:#1a1a1a;"></div>
<svg style="left:17px;top:766.3px;" width="8" height="8" viewBox="0 0 8 8"><path d="M0.4 0.4 L7.2 7.2 M7.2 0.4 L0.4 7.2" stroke="#b0b0b0" stroke-width="1.3"/></svg>
<div style="left:38.9px;top:760.5px;width:14.4px;height:14.7px;background:#b39c79;"></div>
<span class="t" style="left:68.64px;top:759.48px;font-size:16px;line-height:20px;color:#dedede;transform:scaleX(0.9835);transform-origin:0 0;">Ending</span>
<svg style="left:131.6px;top:764.8px;" width="13" height="11" viewBox="0 0 13 11"><path d="M0 0.9 H12.2 M0 5.2 H12.2 M0 9.5 H12.2" stroke="#bcbcbc" stroke-width="1.6" fill="none"/></svg>
<span class="t" style="left:20.068px;top:796.56px;font-size:22.2px;line-height:20px;color:#36a0f7;font-weight:bold;transform:scaleX(0.9651);transform-origin:0 0;text-shadow:none;">0:00:00:00</span>
<span class="t" style="left:16.996px;top:818.25px;font-size:13.4px;line-height:20px;color:#1c70ba;transform:scaleX(1.0657);transform-origin:0 0;">00000 (24.00 fps)</span>
<div style="left:146px;top:800.2px;width:380px;height:27.2px;background:#141414;border-radius:4.5px;border:1px solid #2c2c2c;"></div>
<svg style="left:154.7px;top:804.4px;" width="25" height="17" viewBox="0 0 25 17"><circle cx="9.4" cy="6.2" r="5" fill="none" stroke="#c0c0c0" stroke-width="1.6"/><path d="M6 10 L1 15" stroke="#c0c0c0" stroke-width="1.9" stroke-linecap="round"/><path d="M16 11.6 H23.4 L19.7 15.2 Z" fill="#c0c0c0"/></svg>
<svg style="left:548px;top:805.5px;" width="26" height="19" viewBox="0 0 26 19"><g fill="#b2b2b2"><rect x="3" y="1" width="5.6" height="3.6"/><rect x="16" y="0.4" width="6.4" height="4.4"/><rect x="16" y="7.6" width="6.4" height="4.4"/><path d="M17.6 14.6 H25.2 L21.4 18.4 Z"/></g><path d="M0 2.8 H16 M11.6 2.8 V9.8 H16" fill="none" stroke="#b2b2b2" stroke-width="1.3"/></svg>
<div style="left:597px;top:815px;width:23px;height:7.4px;background:#4a4a4a;"></div>
<svg style="left:597.6px;top:805px;" width="22" height="18" viewBox="0 0 17.5 14.5"><path d="M2.6 8.6 C2 3.6 5 0.6 8.7 0.6 C12.4 0.6 15.4 3.6 14.8 8.6 H10.2 V13.2 C10.2 14.6 7.2 14.6 7.2 13.2 V8.6 Z M6 4 A1.5 1.7 0 1 0 6.01 4 Z M11.4 4 A1.5 1.7 0 1 0 11.41 4 Z" fill="#b2b2b2" fill-rule="evenodd"/><path d="M0 10.6 H5.6 M11.8 10.6 H17.4" stroke="#b2b2b2" stroke-width="1.3"/></svg>
<svg style="left:635px;top:803px;" width="21" height="21" viewBox="0 0 18 17.2"><path d="M0.6 4.6 V16.4 H14.6" fill="none" stroke="#b2b2b2" stroke-width="1.3"/><path d="M2.6 3 V14.2 H16" fill="none" stroke="#b2b2b2" stroke-width="1"/><rect x="4" y="0.4" width="13.6" height="12.6" fill="#b2b2b2"/><rect x="7" y="2" width="7.6" height="9.4" fill="#6a6a6a"/><rect x="8" y="6" width="5.6" height="1.5" fill="#2a2a2a"/><rect x="4.9" y="1.6" width="1.2" height="1.4" fill="#2a2a2a"/><rect x="15.5" y="1.6" width="1.2" height="1.4" fill="#2a2a2a"/><rect x="4.9" y="4.4" width="1.2" height="1.4" fill="#2a2a2a"/><rect x="15.5" y="4.4" width="1.2" height="1.4" fill="#2a2a2a"/><rect x="4.9" y="7.2" width="1.2" height="1.4" fill="#2a2a2a"/><rect x="15.5" y="7.2" width="1.2" height="1.4" fill="#2a2a2a"/><rect x="4.9" y="10" width="1.2" height="1.4" fill="#2a2a2a"/><rect x="15.5" y="10" width="1.2" height="1.4" fill="#2a2a2a"/></svg>
<svg style="left:672.4px;top:803px;" width="21" height="21" viewBox="0 0 19 19"><g fill="#272727" stroke="#b2b2b2" stroke-width="1.3"><circle cx="6.6" cy="12.6" r="5.8"/><circle cx="8.8" cy="10.6" r="5.8"/><circle cx="11" cy="8.6" r="5.8"/></g><circle cx="12.6" cy="6.6" r="6" fill="#555" stroke="#b2b2b2" stroke-width="1.3"/></svg>
<svg style="left:720px;top:802px;" width="24" height="22" viewBox="0 0 24 22"><rect x="2.4" y="4" width="20.6" height="17.4" fill="none" stroke="#b2b2b2" stroke-width="1.5"/><path d="M5 7.6 C12 7.6 12 17.6 20 17.6" fill="none" stroke="#b2b2b2" stroke-width="1.5"/><path d="M8.4 0.4 V4 M12.6 0.4 V4 M16.8 0.4 V4 M21 0.4 V4 M0 8.4 H2.4 M0 12.8 H2.4 M0 17.2 H2.4" stroke="#b2b2b2" stroke-width="1.2"/></svg>
<div style="left:2px;top:840px;width:764px;height:28px;background:#252525;"></div>
<div style="left:2px;top:839.6px;width:764px;height:1.6px;background:#1c1c1c;"></div>
<div style="left:99px;top:847px;width:1.7px;height:15.4px;background:#101010;"></div>
<div style="left:100.7px;top:847px;width:0.9px;height:15.4px;background:#2e2e2e;"></div>
<div style="left:144.6px;top:847px;width:1.7px;height:15.4px;background:#101010;"></div>
<div style="left:146.3px;top:847px;width:0.9px;height:15.4px;background:#2e2e2e;"></div>
<div style="left:192px;top:847px;width:1.7px;height:15.4px;background:#101010;"></div>
<div style="left:193.7px;top:847px;width:0.9px;height:15.4px;background:#2e2e2e;"></div>
<div style="left:378.8px;top:847px;width:1.7px;height:15.4px;background:#101010;"></div>
<div style="left:380.5px;top:847px;width:0.9px;height:15.4px;background:#2e2e2e;"></div>
<div style="left:575.2px;top:847px;width:1.7px;height:15.4px;background:#101010;"></div>
<div style="left:576.9px;top:847px;width:0.9px;height:15.4px;background:#2e2e2e;"></div>
<div style="left:743px;top:847px;width:1.7px;height:15.4px;background:#101010;"></div>
<div style="left:744.7px;top:847px;width:0.9px;height:15.4px;background:#2e2e2e;"></div>
<svg style="left:10.6px;top:849.6px;" width="16" height="11" viewBox="0 0 16 11"><path d="M0.3 5.2 C4 -1.2 11.6 -1.2 15.4 5.2 C11.6 11.4 4 11.4 0.3 5.2 Z" fill="#b2b2b2"/><circle cx="7.8" cy="5" r="3.5" fill="#232323"/><circle cx="8.8" cy="3.9" r="1.1" fill="#b2b2b2"/></svg>
<svg style="left:31px;top:846.8px;" width="18" height="16" viewBox="0 0 18 16"><path d="M0.4 5.4 H3.6 L8.4 0.6 V15.4 L3.6 10.6 H0.4 Z" fill="#b2b2b2"/><g fill="none" stroke="#b2b2b2" stroke-width="1.5"><path d="M10.6 4.6 C12.8 6.2 12.8 9.8 10.6 11.4"/><path d="M11.6 1 C17.6 3.6 17.6 12.4 11.6 15"/></g></svg>
<div style="left:55.4px;top:849.5px;width:10.9px;height:10.9px;background:#b2b2b2;border-radius:50%;"></div>
<svg style="left:75.6px;top:846px;" width="14" height="16" viewBox="0 0 14 16"><path d="M3.4 7 V4.6 C3.4 -0.4 10.6 -0.4 10.6 4.6 V7" fill="none" stroke="#b2b2b2" stroke-width="1.7"/><path d="M0.4 6.6 H13.6 V15 H0.4 Z M7 8.2 A1.6 1.6 0 0 0 6.1 11.1 L5.6 13.2 H8.4 L7.9 11.1 A1.6 1.6 0 0 0 7 8.2 Z" fill="#b2b2b2" fill-rule="evenodd"/></svg>
<svg style="left:119.6px;top:846px;" width="18" height="18" viewBox="0 0 18 18"><path d="M0.6 1.2 L1.4 8.2 L10.6 17 L17.6 9.6 L8.4 0.8 Z M4.4 2.8 A1.7 1.7 0 1 1 4.39 2.8 Z" fill="#b2b2b2" fill-rule="evenodd"/></svg>
<span class="t" style="left:152.65px;top:844.84px;font-size:12.5px;line-height:20px;color:#b0b0b0;">#</span>
<span class="t" style="left:199.808px;top:845.05px;font-size:13.2px;line-height:20px;color:#b0b0b0;transform:scaleX(0.9828);transform-origin:0 0;">Source Name</span>
<svg style="left:386.2px;top:846.2px;" width="17.5" height="14.5" viewBox="0 0 17.5 14.5"><path d="M2.6 8.6 C2 3.6 5 0.6 8.7 0.6 C12.4 0.6 15.4 3.6 14.8 8.6 H10.2 V13.2 C10.2 14.6 7.2 14.6 7.2 13.2 V8.6 Z M6 4 A1.5 1.7 0 1 0 6.01 4 Z M11.4 4 A1.5 1.7 0 1 0 11.41 4 Z" fill="#b2b2b2" fill-rule="evenodd"/><path d="M0 10.6 H5.6 M11.8 10.6 H17.4" stroke="#b2b2b2" stroke-width="1.3"/></svg>
<svg style="left:410px;top:847.4px;" width="15" height="15" viewBox="0 0 15 15"><circle cx="7.3" cy="7.3" r="2.9" fill="none" stroke="#b2b2b2" stroke-width="1.3"/><path d="M7.3 0 V3 M7.3 11.6 V14.6 M0 7.3 H3 M11.6 7.3 H14.6 M2.2 2.2 L4.3 4.3 M10.3 10.3 L12.4 12.4 M12.4 2.2 L10.3 4.3 M4.3 10.3 L2.2 12.4" stroke="#b2b2b2" stroke-width="1.2"/></svg>
<svg style="left:430.2px;top:846.6px;" width="16" height="16" viewBox="0 0 16 16"><rect x="0" y="0" width="2.5" height="2.3" fill="#b2b2b2"/><rect x="2.05" y="2" width="2.5" height="2.3" fill="#b2b2b2"/><rect x="4.1" y="4" width="2.5" height="2.3" fill="#b2b2b2"/><rect x="6.15" y="6" width="2.5" height="2.3" fill="#b2b2b2"/><rect x="8.2" y="8" width="2.5" height="2.3" fill="#b2b2b2"/><rect x="10.25" y="10" width="2.5" height="2.3" fill="#b2b2b2"/><rect x="12.3" y="12" width="2.5" height="2.3" fill="#b2b2b2"/></svg>
<span class="t" style="left:451.52px;top:845.41px;font-size:18px;line-height:20px;color:#b2b2b2;font-style:italic;font-family:'Liberation Serif',serif;letter-spacing:-0.5px;">fx</span>
<svg style="left:471.8px;top:846px;" width="18" height="17.2" viewBox="0 0 18 17.2"><path d="M0.6 4.6 V16.4 H14.6" fill="none" stroke="#b2b2b2" stroke-width="1.3"/><path d="M2.6 3 V14.2 H16" fill="none" stroke="#b2b2b2" stroke-width="1"/><rect x="4" y="0.4" width="13.6" height="12.6" fill="#b2b2b2"/><rect x="7" y="2" width="7.6" height="9.4" fill="#6a6a6a"/><rect x="8" y="6" width="5.6" height="1.5" fill="#2a2a2a"/><rect x="4.9" y="1.6" width="1.2" height="1.4" fill="#2a2a2a"/><rect x="15.5" y="1.6" width="1.2" height="1.4" fill="#2a2a2a"/><rect x="4.9" y="4.4" width="1.2" height="1.4" fill="#2a2a2a"/><rect x="15.5" y="4.4" width="1.2" height="1.4" fill="#2a2a2a"/><rect x="4.9" y="7.2" width="1.2" height="1.4" fill="#2a2a2a"/><rect x="15.5" y="7.2" width="1.2" height="1.4" fill="#2a2a2a"/><rect x="4.9" y="10" width="1.2" height="1.4" fill="#2a2a2a"/><rect x="15.5" y="10" width="1.2" height="1.4" fill="#2a2a2a"/></svg>
<svg style="left:493.6px;top:844.8px;" width="19" height="19" viewBox="0 0 19 19"><g fill="#272727" stroke="#b2b2b2" stroke-width="1.3"><circle cx="6.6" cy="12.6" r="5.8"/><circle cx="8.8" cy="10.6" r="5.8"/><circle cx="11" cy="8.6" r="5.8"/></g><circle cx="12.6" cy="6.6" r="6" fill="#6e6e6e" stroke="#b2b2b2" stroke-width="1.3"/></svg>
<svg style="left:516.8px;top:847px;" width="16" height="16" viewBox="0 0 16 16"><circle cx="7.7" cy="7.7" r="7" fill="none" stroke="#b2b2b2" stroke-width="1.4"/><path d="M12.8 2.8 A7 7 0 0 1 2.8 12.8 Z" fill="#b2b2b2"/></svg>
<svg style="left:539.4px;top:848.2px;" width="14" height="14" viewBox="0 0 14 14"><path d="M6.6 0.8 L12.6 3.6 V9.8 L6.6 12.8 L0.7 9.8 V3.6 Z M0.9 3.7 L6.6 6.6 L12.4 3.7 M6.6 6.6 V12.6" fill="none" stroke="#b2b2b2" stroke-width="1.35" stroke-linejoin="round"/></svg>
<span class="t" style="left:583.608px;top:844.95px;font-size:13.2px;line-height:20px;color:#b0b0b0;transform:scaleX(1.0186);transform-origin:0 0;">Parent &amp; Link</span>
<div style="left:3px;top:868.4px;width:763px;height:22.8px;background:#494949;"></div>
<div style="left:30px;top:870px;width:19px;height:18px;background:#3b3b3b;"></div>
<div style="left:52px;top:870px;width:19px;height:18px;background:#3b3b3b;"></div>
<div style="left:73px;top:870px;width:19px;height:18px;background:#3b3b3b;"></div>
<svg style="left:31px;top:871.2px;" width="18" height="16" viewBox="0 0 18 16"><path d="M0.4 5.4 H3.6 L8.4 0.6 V15.4 L3.6 10.6 H0.4 Z" fill="#bdbdbd"/><g fill="none" stroke="#bdbdbd" stroke-width="1.5"><path d="M10.6 4.6 C12.8 6.2 12.8 9.8 10.6 11.4"/><path d="M11.6 1 C17.6 3.6 17.6 12.4 11.6 15"/></g></svg>
<svg style="left:108.6px;top:877.2px;" width="12" height="7" viewBox="0 0 12 7"><path d="M0.8 0.8 L5.5 6 L10.2 0.8" fill="none" stroke="#c8c8c8" stroke-width="1.7"/></svg>
<div style="left:125px;top:870.8px;width:17.2px;height:17.2px;background:#b5ccb6;"></div>
<span class="t" style="left:154.252px;top:869.98px;font-size:15.8px;line-height:20px;color:#e6e6e6;">1</span>
<svg style="left:199px;top:870.8px;" width="15" height="17.4" viewBox="0 0 17 21"><path d="M0.4 0.4 H11.4 L16.4 5.6 V20.6 H0.4 Z" fill="#ffffff"/><path d="M11.2 0.6 V5.8 H16.2" fill="none" stroke="#d0d0d0" stroke-width="0.7"/><rect x="2.8" y="5.6" width="10.8" height="10.6" rx="2.4" fill="#ee3b5b"/><path d="M7 13.2 V8.4 L11 7.6 V12.4" fill="none" stroke="#fff" stroke-width="0.9"/><circle cx="6.2" cy="13.2" r="1.1" fill="#fff"/><circle cx="10.2" cy="12.4" r="1.1" fill="#fff"/><rect x="5.4" y="17.8" width="5.6" height="0.9" fill="#999"/></svg>
<div style="left:219.6px;top:868.4px;width:159.4px;height:22.8px;background:#a7a7a7;"></div>
<span class="t" style="left:223.44px;top:869.88px;font-size:16px;line-height:20px;color:#1c1c1c;transform:scaleX(1.0446);transform-origin:0 0;">Ending.mp3</span>
<div style="left:386px;top:870px;width:18.8px;height:18px;background:#3b3b3b;"></div>
<svg style="left:386.6px;top:872.4px;" width="17.5" height="14.5" viewBox="0 0 17.5 14.5"><path d="M2.6 8.6 C2 3.6 5 0.6 8.7 0.6 C12.4 0.6 15.4 3.6 14.8 8.6 H10.2 V13.2 C10.2 14.6 7.2 14.6 7.2 13.2 V8.6 Z M6 4 A1.5 1.7 0 1 0 6.01 4 Z M11.4 4 A1.5 1.7 0 1 0 11.41 4 Z" fill="#c4c4c4" fill-rule="evenodd"/><path d="M0 10.6 H5.6 M11.8 10.6 H17.4" stroke="#c4c4c4" stroke-width="1.3"/></svg>
<div style="left:429px;top:870px;width:18.8px;height:18px;background:#3b3b3b;"></div>
<svg style="left:429px;top:870px;" width="19" height="18" viewBox="0 0 19 18"><path d="M1.8 16.4 L16.6 1.6" stroke="#c6c6c6" stroke-width="1.5"/></svg>
<div style="left:515.2px;top:870px;width:18.8px;height:18px;background:#3b3b3b;"></div>
<svg style="left:582.6px;top:871.6px;" width="19" height="16" viewBox="0 0 19 16"><path d="M9.4 8.6 C8.4 9.8 6.2 9.2 6.2 7.4 C6.2 5 9.4 3.8 11.4 5.4 C13.8 7.4 12.8 11.4 9.4 12.2 C5 13.2 1.6 9.6 2.6 5.6 C3.6 1.4 9 -0.4 13 1.8 C15.6 3.2 16.8 6 16.4 8.6 C16 11 14.8 13 12.8 14.2" fill="none" stroke="#a9a9a9" stroke-width="1.35"/></svg>
<div style="left:610px;top:870px;width:128px;height:20px;background:#1f1f1f;border-radius:2px;"></div>
<span class="t" style="left:618.04px;top:869.88px;font-size:16px;line-height:20px;color:#e4e4e4;">None</span>
<svg style="left:719.8px;top:876.2px;" width="12" height="7" viewBox="0 0 12 7"><path d="M0.8 0.8 L5.5 6 L10.2 0.8" fill="none" stroke="#d0d0d0" stroke-width="1.7"/></svg>
<div style="left:3px;top:915.8px;width:763px;height:1.2px;background:#1d1d1d;"></div>
<div style="left:3px;top:940.2px;width:763px;height:1.2px;background:#1d1d1d;"></div>
<div style="left:3px;top:964.6px;width:763px;height:1.2px;background:#1d1d1d;"></div>
<div style="left:3px;top:1061.8px;width:763px;height:1.2px;background:#1d1d1d;"></div>
<svg style="left:133px;top:902.4px;" width="12" height="7" viewBox="0 0 12 7"><path d="M0.8 0.8 L5.5 6 L10.2 0.8" fill="none" stroke="#bdbdbd" stroke-width="1.7"/></svg>
<span class="t" style="left:154.04px;top:895.68px;font-size:16px;line-height:20px;color:#b6b6b6;transform:scaleX(1.0214);transform-origin:0 0;">Audio</span>
<svg style="left:176px;top:918.4px;" width="17" height="19" viewBox="0 0 17 19"><circle cx="8" cy="10.6" r="6.8" fill="none" stroke="#b8b8b8" stroke-width="1.5"/><path d="M5.4 0.9 H10.6 M8 1 V3.6 M1.2 3.4 L3.2 5.2" stroke="#b8b8b8" stroke-width="1.5" fill="none"/></svg>
<span class="t" style="left:201.64px;top:920.08px;font-size:16px;line-height:20px;color:#b6b6b6;transform:scaleX(0.9845);transform-origin:0 0;">Audio Levels</span>
<span class="t" style="left:387.44px;top:918.68px;font-size:16px;line-height:20px;color:#2d8ceb;transform:scaleX(0.9436);transform-origin:0 0;">+0,00</span>
<span class="t" style="left:428.5px;top:918.67px;font-size:15px;line-height:20px;color:#b0b0b0;transform:scaleX(0.9320);transform-origin:0 0;">dB</span>
<svg style="left:601.4px;top:920.2px;" width="19" height="16" viewBox="0 0 19 16"><path d="M9.4 8.6 C8.4 9.8 6.2 9.2 6.2 7.4 C6.2 5 9.4 3.8 11.4 5.4 C13.8 7.4 12.8 11.4 9.4 12.2 C5 13.2 1.6 9.6 2.6 5.6 C3.6 1.4 9 -0.4 13 1.8 C15.6 3.2 16.8 6 16.4 8.6 C16 11 14.8 13 12.8 14.2" fill="none" stroke="#a9a9a9" stroke-width="1.35"/></svg>
<svg style="left:157.6px;top:951px;" width="12" height="7" viewBox="0 0 12 7"><path d="M0.8 0.8 L5.5 6 L10.2 0.8" fill="none" stroke="#bdbdbd" stroke-width="1.7"/></svg>
<span class="t" style="left:178.54px;top:944.38px;font-size:16px;line-height:20px;color:#b6b6b6;transform:scaleX(1.0041);transform-origin:0 0;">Waveform</span>
<span class="t" style="left:202.44px;top:1004.38px;font-size:16px;line-height:20px;color:#b6b6b6;transform:scaleX(1.0124);transform-origin:0 0;">Waveform</span>
<div style="left:766px;top:749px;width:1.8px;height:90px;background:#1a1a1a;"></div>
<div style="left:766px;top:839px;width:2.2px;height:362px;background:#0d0d0d;"></div>
<div style="left:767px;top:796.6px;width:1205px;height:13.6px;background:#101010;border-radius:7px;"></div>
<div style="left:780px;top:797.6px;width:1183px;height:11.8px;background:#696969;"></div>
<div style="left:767.2px;top:797.4px;width:9px;height:12.2px;background:#2d8ceb;border-radius:6.5px 0 0 6.5px;"></div>
<div style="left:778px;top:797.6px;width:1.7px;height:11.8px;background:#2d8ceb;"></div>
<div style="left:1962.5px;top:797.4px;width:9.2px;height:12.2px;background:#2d8ceb;border-radius:0 6.5px 6.5px 0;"></div>
<div style="left:767.4px;top:810px;width:60px;height:26px;overflow:hidden;">
<span class="t" style="left:-2.816px;top:1.96px;font-size:13.6px;line-height:20px;color:#a9a9a9;transform:scaleX(1.0147);transform-origin:0 0;">0:00s</span>
</div>
<div style="left:950.85px;top:831.4px;width:1.5px;height:6.6px;background:#9a9a9a;"></div>
<span class="t" style="left:939.534px;top:811.96px;font-size:13.6px;line-height:20px;color:#a9a9a9;transform:scaleX(1.0379);transform-origin:0 0;">05s</span>
<div style="left:1124.4px;top:831.4px;width:1.5px;height:6.6px;background:#9a9a9a;"></div>
<span class="t" style="left:1113.08px;top:811.96px;font-size:13.6px;line-height:20px;color:#a9a9a9;transform:scaleX(1.0379);transform-origin:0 0;">10s</span>
<div style="left:1297.95px;top:831.4px;width:1.5px;height:6.6px;background:#9a9a9a;"></div>
<span class="t" style="left:1286.63px;top:811.96px;font-size:13.6px;line-height:20px;color:#a9a9a9;transform:scaleX(1.0379);transform-origin:0 0;">15s</span>
<div style="left:1471.5px;top:831.4px;width:1.5px;height:6.6px;background:#9a9a9a;"></div>
<span class="t" style="left:1460.18px;top:811.96px;font-size:13.6px;line-height:20px;color:#a9a9a9;transform:scaleX(1.0379);transform-origin:0 0;">20s</span>
<div style="left:1645.05px;top:831.4px;width:1.5px;height:6.6px;background:#9a9a9a;"></div>
<span class="t" style="left:1633.73px;top:811.96px;font-size:13.6px;line-height:20px;color:#a9a9a9;transform:scaleX(1.0379);transform-origin:0 0;">25s</span>
<div style="left:1818.6px;top:831.4px;width:1.5px;height:6.6px;background:#9a9a9a;"></div>
<span class="t" style="left:1807.28px;top:811.96px;font-size:13.6px;line-height:20px;color:#a9a9a9;transform:scaleX(1.0379);transform-origin:0 0;">30s</span>
<div style="left:768px;top:838px;width:1204px;height:1.6px;background:#0f0f0f;"></div>
<div style="left:768px;top:839.6px;width:1203.6px;height:21.6px;background:#141414;"></div>
<div style="left:779.2px;top:839.8px;width:1183.4px;height:21.3px;background:#636363;"></div>
<div style="left:768.9px;top:840px;width:7.4px;height:21px;background:#2d8ceb;border-radius:5.5px 0 0 5.5px;"></div>
<div style="left:1962.5px;top:840px;width:8px;height:21px;background:#2d8ceb;border-radius:0 5.5px 5.5px 0;"></div>
<div style="left:768px;top:861px;width:1204px;height:1.6px;background:#151515;"></div>
<div style="left:778.6px;top:862.3px;width:1184px;height:4.8px;background:#12c022;"></div>
<div style="left:768px;top:862.3px;width:10.6px;height:4.8px;background:#2a2a2a;"></div>
<div style="left:768px;top:867.2px;width:1194.5px;height:333px;background:#353535;"></div>
<div style="left:1962.5px;top:867.2px;width:9.3px;height:333px;background:#2d2d2d;"></div>
<div style="left:1971.8px;top:839px;width:27.2px;height:362px;background:#222222;"></div>
<div style="left:768px;top:868.4px;width:1203.5px;height:22.8px;background:#444444;"></div>
<div style="left:779.4px;top:868.2px;width:1182px;height:22.8px;background:#bccbbe;"></div>
<div style="left:779.4px;top:869.6px;width:8px;height:8px;background:#060606;"></div>
<div style="left:779.4px;top:869.6px;width:1182px;height:21.4px;background:#a5bba7;border-radius:7px 0 0 0;background-image:linear-gradient(#adc1af,#9ab09c);"></div>
<svg style="left:779.4px;top:869.6px;opacity:0.1;mix-blend-mode:multiply" width="1182" height="21.4"><filter id="nz" x="0" y="0" width="100%" height="100%"><feTurbulence type="fractalNoise" baseFrequency="0.55" numOctaves="2" seed="4"/><feColorMatrix type="matrix" values="0 0 0 0 0  0 0 0 0 0  0 0 0 0 0  1.6 0 0 0 -0.35"/></filter><rect x="0" y="0" width="1182" height="21.4" filter="url(#nz)"/></svg>
<svg style="left:1954px;top:869.6px;" width="8" height="8" viewBox="0 0 8 8"><path d="M1 0.6 H7.4 V7 Z" fill="#151515"/></svg>
<div style="left:768px;top:891.2px;width:1203.5px;height:1.3px;background:#2a2a2a;"></div>
<div style="left:768px;top:915.8px;width:1203.5px;height:1.3px;background:#2a2a2a;"></div>
<div style="left:768px;top:940.2px;width:1203.5px;height:1.3px;background:#2a2a2a;"></div>
<div style="left:768px;top:964.6px;width:1203.5px;height:1.3px;background:#2a2a2a;"></div>
<div style="left:768px;top:1061.8px;width:1203.5px;height:1.3px;background:#2a2a2a;"></div>
<div style="left:768px;top:941.4px;width:1203.5px;height:23.2px;background:#2b2b2b;"></div>
<svg style="left:0;top:0" width="1999" height="1228" viewBox="0 0 1999 1228"><path d="M782.5 1011.2L782.5 1010.6L783.8 1001.8L785.0 986.6L786.2 984.0L787.5 984.6L788.8 986.6L790.0 988.2L791.2 985.1L792.5 987.6L793.8 990.8L795.0 990.4L796.2 992.1L797.5 990.9L798.8 989.8L800.0 989.6L801.2 989.9L802.5 989.4L803.8 991.5L805.0 986.8L806.2 990.0L807.5 992.1L808.8 994.1L810.0 994.9L811.2 995.3L812.5 992.8L813.8 991.3L815.0 984.0L816.2 984.9L817.5 984.9L818.8 984.3L820.0 986.7L821.2 985.3L822.5 983.6L823.8 985.3L825.0 989.1L826.2 990.3L827.5 990.6L828.8 989.7L830.0 990.4L831.2 993.5L832.5 994.2L833.8 990.5L835.0 991.7L836.2 991.8L837.5 993.4L838.8 992.8L840.0 992.4L841.2 992.0L842.5 992.0L843.8 991.1L845.0 991.8L846.2 991.9L847.5 993.8L848.8 993.0L850.0 989.8L851.2 990.8L852.5 993.4L853.8 993.9L855.0 994.1L856.2 997.0L857.5 997.6L858.8 999.5L860.0 1000.7L861.2 1001.4L862.5 998.5L863.8 993.5L865.0 994.8L866.2 993.9L867.5 989.1L868.8 988.8L870.0 988.0L871.2 990.1L872.5 989.9L873.8 991.3L875.0 992.9L876.2 993.5L877.5 992.5L878.8 990.9L880.0 992.3L881.2 994.8L882.5 993.6L883.8 995.1L885.0 995.1L886.2 994.0L887.5 992.7L888.8 993.5L890.0 994.2L891.2 996.5L892.5 995.2L893.8 996.3L895.0 997.0L896.2 997.9L897.5 997.6L898.8 998.4L900.0 995.5L901.2 993.5L902.5 992.7L903.8 989.3L905.0 990.3L906.2 992.4L907.5 992.8L908.8 994.5L910.0 994.5L911.2 995.3L912.5 991.3L913.8 990.5L915.0 993.1L916.2 993.3L917.5 997.8L918.8 998.5L920.0 997.1L921.2 996.7L922.5 993.3L923.8 995.3L925.0 994.0L926.2 993.1L927.5 991.8L928.8 992.5L930.0 992.3L931.2 990.4L932.5 991.7L933.8 987.2L935.0 988.7L936.2 988.4L937.5 989.6L938.8 990.0L940.0 991.3L941.2 993.6L942.5 993.6L943.8 992.4L945.0 993.5L946.2 993.6L947.5 994.9L948.8 994.8L950.0 992.7L951.2 991.7L952.5 991.1L953.8 992.1L955.0 991.6L956.2 985.9L957.5 984.7L958.8 983.7L960.0 980.9L961.2 982.0L962.5 983.4L963.8 981.1L965.0 983.9L966.2 982.6L967.5 982.1L968.8 984.0L970.0 983.5L971.2 986.9L972.5 989.3L973.8 991.3L975.0 988.8L976.2 991.7L977.5 990.5L978.8 993.7L980.0 995.2L981.2 997.9L982.5 993.3L983.8 997.3L985.0 999.9L986.2 1000.8L987.5 1001.2L988.8 1000.8L990.0 1002.4L991.2 1002.3L992.5 1001.0L993.8 1001.1L995.0 996.6L996.2 996.3L997.5 997.2L998.8 996.1L1000.0 995.6L1001.2 994.5L1002.5 996.7L1003.8 997.0L1005.0 998.7L1006.2 1000.6L1007.5 1001.7L1008.8 999.8L1010.0 998.6L1011.2 999.6L1012.5 998.8L1013.8 996.3L1015.0 997.1L1016.2 996.2L1017.5 995.0L1018.8 993.5L1020.0 996.2L1021.2 996.4L1022.5 995.5L1023.8 998.0L1025.0 997.3L1026.2 996.9L1027.5 992.7L1028.8 988.0L1030.0 987.3L1031.2 986.6L1032.5 986.1L1033.8 986.9L1035.0 989.5L1036.2 991.9L1037.5 995.5L1038.8 997.0L1040.0 998.2L1041.2 1001.1L1042.5 999.6L1043.8 994.7L1045.0 995.7L1046.2 996.1L1047.5 997.4L1048.8 998.1L1050.0 998.9L1051.2 993.7L1052.5 995.8L1053.8 998.4L1055.0 997.7L1056.2 997.0L1057.5 998.5L1058.8 999.5L1060.0 998.4L1061.2 997.5L1062.5 996.4L1063.8 992.2L1065.0 994.2L1066.2 993.2L1067.5 993.5L1068.8 991.4L1070.0 992.4L1071.2 992.1L1072.5 990.9L1073.8 995.2L1075.0 996.8L1076.2 996.1L1077.5 998.0L1078.8 997.5L1080.0 996.8L1081.2 992.6L1082.5 994.7L1083.8 996.4L1085.0 997.1L1086.2 995.7L1087.5 996.1L1088.8 995.9L1090.0 993.0L1091.2 996.0L1092.5 994.1L1093.8 996.3L1095.0 999.6L1096.2 999.3L1097.5 999.8L1098.8 1001.4L1100.0 998.8L1101.2 998.4L1102.5 996.6L1103.8 994.4L1105.0 991.2L1106.2 993.2L1107.5 994.5L1108.8 996.3L1110.0 997.7L1111.2 993.5L1112.5 997.6L1113.8 999.0L1115.0 1001.8L1116.2 998.6L1117.5 1001.0L1118.8 1001.3L1120.0 1000.7L1121.2 996.7L1122.5 993.5L1123.8 995.0L1125.0 995.1L1126.2 992.0L1127.5 994.1L1128.8 995.4L1130.0 994.8L1131.2 995.7L1132.5 996.0L1133.8 998.4L1135.0 997.3L1136.2 998.0L1137.5 991.9L1138.8 995.6L1140.0 994.8L1141.2 993.3L1142.5 995.9L1143.8 996.2L1145.0 995.9L1146.2 999.0L1147.5 998.2L1148.8 1000.2L1150.0 998.9L1151.2 998.0L1152.5 998.4L1153.8 995.8L1155.0 996.7L1156.2 996.8L1157.5 996.4L1158.8 994.7L1160.0 994.3L1161.2 991.8L1162.5 991.1L1163.8 991.5L1165.0 992.5L1166.2 991.3L1167.5 993.6L1168.8 992.3L1170.0 992.9L1171.2 994.6L1172.5 994.5L1173.8 996.1L1175.0 992.2L1176.2 992.8L1177.5 991.2L1178.8 990.9L1180.0 992.5L1181.2 992.0L1182.5 994.9L1183.8 996.1L1185.0 997.7L1186.2 1000.9L1187.5 999.1L1188.8 999.0L1190.0 997.4L1191.2 998.3L1192.5 997.6L1193.8 997.0L1195.0 997.6L1196.2 996.7L1197.5 992.0L1198.8 995.8L1200.0 997.1L1201.2 999.5L1202.5 999.6L1203.8 995.5L1205.0 995.9L1206.2 996.5L1207.5 993.6L1208.8 994.0L1210.0 991.4L1211.2 989.7L1212.5 988.8L1213.8 989.5L1215.0 991.1L1216.2 990.2L1217.5 991.5L1218.8 991.9L1220.0 990.8L1221.2 990.9L1222.5 989.8L1223.8 991.5L1225.0 993.7L1226.2 993.9L1227.5 994.3L1228.8 993.9L1230.0 996.1L1231.2 995.8L1232.5 993.4L1233.8 993.3L1235.0 993.1L1236.2 994.2L1237.5 992.6L1238.8 992.9L1240.0 993.5L1241.2 996.0L1242.5 996.5L1243.8 999.3L1245.0 1001.3L1246.2 998.0L1247.5 1001.1L1248.8 1000.4L1250.0 999.1L1251.2 1000.5L1252.5 997.4L1253.8 998.3L1255.0 997.8L1256.2 996.8L1257.5 995.7L1258.8 996.9L1260.0 996.4L1261.2 996.5L1262.5 999.2L1263.8 994.5L1265.0 997.2L1266.2 999.0L1267.5 997.1L1268.8 996.5L1270.0 996.9L1271.2 996.1L1272.5 996.6L1273.8 997.4L1275.0 991.9L1276.2 995.7L1277.5 997.0L1278.8 998.1L1280.0 999.6L1281.2 999.3L1282.5 999.1L1283.8 998.5L1285.0 999.7L1286.2 997.3L1287.5 996.9L1288.8 994.1L1290.0 990.6L1291.2 989.8L1292.5 991.5L1293.8 990.9L1295.0 993.1L1296.2 997.5L1297.5 998.2L1298.8 1001.8L1300.0 1003.2L1301.2 1001.3L1302.5 1001.4L1303.8 999.1L1305.0 1001.1L1306.2 1001.4L1307.5 997.2L1308.8 994.3L1310.0 995.8L1311.2 995.0L1312.5 996.0L1313.8 998.0L1315.0 1001.8L1316.2 999.3L1317.5 997.5L1318.8 998.2L1320.0 1001.8L1321.2 1001.0L1322.5 1001.4L1323.8 993.0L1325.0 987.9L1326.2 983.0L1327.5 988.2L1328.8 988.7L1330.0 991.2L1331.2 994.5L1332.5 994.0L1333.8 995.2L1335.0 995.8L1336.2 996.3L1337.5 997.6L1338.8 996.1L1340.0 996.8L1341.2 993.4L1342.5 991.0L1343.8 986.3L1345.0 987.6L1346.2 984.0L1347.5 986.3L1348.8 987.2L1350.0 986.1L1351.2 986.2L1352.5 987.6L1353.8 988.6L1355.0 987.5L1356.2 987.1L1357.5 987.8L1358.8 986.9L1360.0 981.6L1361.2 983.0L1362.5 985.4L1363.8 989.5L1365.0 991.2L1366.2 994.6L1367.5 995.5L1368.8 991.1L1370.0 993.6L1371.2 992.5L1372.5 992.0L1373.8 986.8L1375.0 987.5L1376.2 990.4L1377.5 991.2L1378.8 992.6L1380.0 992.2L1381.2 994.9L1382.5 991.7L1383.8 994.2L1385.0 996.5L1386.2 993.8L1387.5 993.6L1388.8 992.6L1390.0 992.9L1391.2 992.9L1392.5 991.3L1393.8 990.1L1395.0 992.6L1396.2 992.3L1397.5 992.1L1398.8 990.4L1400.0 992.6L1401.2 994.0L1402.5 993.5L1403.8 994.7L1405.0 992.7L1406.2 989.2L1407.5 991.8L1408.8 988.8L1410.0 988.6L1411.2 989.8L1412.5 988.3L1413.8 987.2L1415.0 988.0L1416.2 986.6L1417.5 987.4L1418.8 985.9L1420.0 985.1L1421.2 985.8L1422.5 988.8L1423.8 987.1L1425.0 988.8L1426.2 991.8L1427.5 994.2L1428.8 998.2L1430.0 996.1L1431.2 995.2L1432.5 995.8L1433.8 995.5L1435.0 999.3L1436.2 998.6L1437.5 997.2L1438.8 995.3L1440.0 995.4L1441.2 995.5L1442.5 993.5L1443.8 995.5L1445.0 997.4L1446.2 997.9L1447.5 995.9L1448.8 998.5L1450.0 1001.2L1451.2 998.2L1452.5 1001.1L1453.8 1001.7L1455.0 1004.3L1456.2 998.9L1457.5 995.3L1458.8 993.8L1460.0 993.2L1461.2 993.2L1462.5 989.8L1463.8 992.7L1465.0 994.4L1466.2 995.2L1467.5 996.7L1468.8 991.8L1470.0 992.6L1471.2 994.4L1472.5 994.0L1473.8 995.6L1475.0 990.8L1476.2 992.0L1477.5 992.3L1478.8 990.7L1480.0 991.0L1481.2 989.4L1482.5 988.9L1483.8 987.9L1485.0 986.0L1486.2 983.6L1487.5 983.5L1488.8 984.4L1490.0 990.0L1491.2 993.8L1492.5 990.8L1493.8 988.8L1495.0 985.2L1496.2 988.6L1497.5 991.6L1498.8 993.5L1500.0 992.8L1501.2 993.0L1502.5 993.8L1503.8 991.0L1505.0 990.6L1506.2 989.6L1507.5 988.7L1508.8 987.0L1510.0 985.3L1511.2 983.5L1512.5 985.2L1513.8 986.3L1515.0 988.5L1516.2 990.4L1517.5 989.1L1518.8 988.8L1520.0 989.5L1521.2 991.0L1522.5 987.0L1523.8 989.2L1525.0 984.0L1526.2 985.4L1527.5 985.1L1528.8 989.6L1530.0 987.6L1531.2 993.5L1532.5 995.1L1533.8 993.8L1535.0 994.7L1536.2 994.2L1537.5 991.2L1538.8 988.9L1540.0 988.7L1541.2 987.4L1542.5 989.8L1543.8 991.8L1545.0 992.7L1546.2 993.9L1547.5 994.6L1548.8 992.4L1550.0 993.1L1551.2 994.6L1552.5 991.7L1553.8 992.1L1555.0 991.2L1556.2 990.6L1557.5 991.7L1558.8 994.1L1560.0 994.2L1561.2 990.6L1562.5 994.4L1563.8 993.9L1565.0 995.3L1566.2 995.7L1567.5 995.6L1568.8 998.4L1570.0 998.5L1571.2 996.1L1572.5 998.0L1573.8 997.0L1575.0 995.8L1576.2 997.5L1577.5 998.9L1578.8 1000.2L1580.0 1001.1L1581.2 997.4L1582.5 1000.5L1583.8 1003.2L1585.0 1002.8L1586.2 1004.6L1587.5 998.9L1588.8 995.4L1590.0 987.4L1591.2 987.1L1592.5 984.6L1593.8 986.2L1595.0 986.9L1596.2 987.5L1597.5 989.6L1598.8 989.5L1600.0 990.6L1601.2 993.1L1602.5 992.0L1603.8 992.4L1605.0 991.8L1606.2 991.4L1607.5 983.1L1608.8 981.2L1610.0 984.0L1611.2 986.0L1612.5 986.6L1613.8 989.7L1615.0 990.2L1616.2 991.5L1617.5 993.5L1618.8 993.7L1620.0 994.2L1621.2 988.0L1622.5 987.8L1623.8 984.4L1625.0 985.7L1626.2 989.0L1627.5 992.4L1628.8 991.6L1630.0 995.4L1631.2 995.2L1632.5 996.4L1633.8 994.3L1635.0 991.1L1636.2 992.0L1637.5 990.1L1638.8 986.8L1640.0 985.4L1641.2 986.0L1642.5 982.7L1643.8 985.2L1645.0 986.1L1646.2 987.6L1647.5 990.3L1648.8 990.6L1650.0 984.5L1651.2 988.1L1652.5 989.5L1653.8 990.8L1655.0 990.2L1656.2 988.7L1657.5 992.0L1658.8 993.0L1660.0 993.6L1661.2 995.6L1662.5 993.8L1663.8 994.6L1665.0 994.2L1666.2 993.9L1667.5 995.3L1668.8 996.1L1670.0 997.3L1671.2 998.2L1672.5 996.2L1673.8 999.2L1675.0 999.4L1676.2 1001.8L1677.5 1003.0L1678.8 1000.9L1680.0 1000.0L1681.2 998.4L1682.5 994.1L1683.8 995.2L1685.0 995.2L1686.2 991.2L1687.5 993.5L1688.8 997.3L1690.0 998.4L1691.2 998.6L1692.5 998.7L1693.8 999.9L1695.0 1001.1L1696.2 997.1L1697.5 996.2L1698.8 998.2L1700.0 996.0L1701.2 994.8L1702.5 992.9L1703.8 994.9L1705.0 998.5L1706.2 994.6L1707.5 997.3L1708.8 998.8L1710.0 999.9L1711.2 997.3L1712.5 1001.2L1713.8 1003.2L1715.0 1003.8L1716.2 1003.5L1717.5 1003.7L1718.8 1002.2L1720.0 1003.1L1721.2 997.1L1722.5 1000.8L1723.8 1002.7L1725.0 1003.2L1726.2 1004.8L1727.5 1005.1L1728.8 1005.7L1730.0 1006.3L1731.2 1007.0L1732.5 1006.5L1733.8 1004.1L1735.0 1006.9L1736.2 1007.4L1737.5 1008.9L1738.8 1009.8L1740.0 1006.2L1741.2 1002.0L1742.5 999.2L1743.8 997.7L1745.0 994.1L1746.2 995.0L1747.5 996.5L1748.8 995.6L1750.0 999.4L1751.2 1003.0L1752.5 1003.5L1753.8 1005.0L1755.0 1004.4L1756.2 1004.6L1757.5 1002.7L1758.8 996.8L1760.0 996.4L1761.2 997.2L1762.5 995.3L1763.8 993.9L1765.0 991.7L1766.2 992.8L1767.5 997.1L1768.8 998.2L1770.0 995.7L1771.2 1000.2L1772.5 1000.8L1773.8 1003.4L1775.0 1000.9L1776.2 1000.1L1777.5 1001.2L1778.8 1002.1L1780.0 1001.7L1781.2 1001.4L1782.5 1001.2L1783.8 1001.0L1785.0 1001.1L1786.2 997.2L1787.5 995.3L1788.8 992.5L1790.0 990.0L1791.2 992.4L1792.5 992.6L1793.8 996.7L1795.0 1001.3L1796.2 1003.7L1797.5 1002.4L1798.8 1002.9L1800.0 1004.6L1801.2 1004.8L1802.5 1004.0L1803.8 1003.3L1805.0 999.6L1806.2 998.8L1807.5 996.4L1808.8 995.3L1810.0 994.1L1811.2 994.6L1812.5 996.1L1813.8 994.5L1815.0 999.7L1816.2 1003.5L1817.5 1006.3L1818.8 1006.8L1820.0 1006.5L1821.2 1003.8L1822.5 1006.9L1823.8 1002.7L1825.0 990.4L1826.2 990.4L1827.5 989.9L1828.8 990.2L1830.0 990.3L1831.2 992.0L1832.5 994.2L1833.8 990.6L1835.0 995.9L1836.2 994.5L1837.5 991.1L1838.8 986.9L1840.0 990.1L1841.2 991.1L1842.5 991.8L1843.8 988.6L1845.0 989.3L1846.2 988.7L1847.5 991.7L1848.8 991.0L1850.0 991.8L1851.2 992.3L1852.5 990.7L1853.8 990.4L1855.0 991.1L1856.2 988.0L1857.5 988.8L1858.8 988.7L1860.0 987.2L1861.2 990.8L1862.5 991.3L1863.8 991.9L1865.0 992.2L1866.2 992.2L1867.5 994.7L1868.8 992.4L1870.0 990.6L1871.2 985.8L1872.5 988.4L1873.8 987.9L1875.0 987.5L1876.2 988.0L1877.5 989.1L1878.8 988.8L1880.0 989.5L1881.2 988.3L1882.5 990.5L1883.8 990.8L1885.0 991.2L1886.2 991.7L1887.5 991.4L1888.8 983.6L1890.0 984.7L1891.2 986.3L1892.5 987.5L1893.8 990.1L1895.0 991.8L1896.2 992.8L1897.5 992.7L1898.8 995.1L1900.0 996.8L1901.2 998.6L1902.5 998.6L1903.8 995.7L1905.0 1000.1L1906.2 1000.9L1907.5 1002.7L1908.8 1004.7L1910.0 1007.2L1911.2 1009.5L1912 1009.8L1927 1009.8L1927 1011.2Z" fill="#c4d4c6"/><path d="M782.5 1060.6L782.5 1060.0L783.8 1050.9L785.0 1035.3L786.2 1032.9L787.5 1034.9L788.8 1035.7L790.0 1036.8L791.2 1037.5L792.5 1037.8L793.8 1036.8L795.0 1039.3L796.2 1036.8L797.5 1034.5L798.8 1036.4L800.0 1038.2L801.2 1034.8L802.5 1036.3L803.8 1038.7L805.0 1038.8L806.2 1039.6L807.5 1038.7L808.8 1040.5L810.0 1044.0L811.2 1044.1L812.5 1039.5L813.8 1037.5L815.0 1035.2L816.2 1035.9L817.5 1031.6L818.8 1029.3L820.0 1033.5L821.2 1034.9L822.5 1037.4L823.8 1036.7L825.0 1039.7L826.2 1040.3L827.5 1039.6L828.8 1041.0L830.0 1041.1L831.2 1042.3L832.5 1041.6L833.8 1040.8L835.0 1040.8L836.2 1042.7L837.5 1042.2L838.8 1042.4L840.0 1043.2L841.2 1043.0L842.5 1040.5L843.8 1035.8L845.0 1037.7L846.2 1039.2L847.5 1040.8L848.8 1040.4L850.0 1041.5L851.2 1043.6L852.5 1044.4L853.8 1045.2L855.0 1041.6L856.2 1044.9L857.5 1047.4L858.8 1045.6L860.0 1048.9L861.2 1048.9L862.5 1047.9L863.8 1047.2L865.0 1045.8L866.2 1042.9L867.5 1042.5L868.8 1040.0L870.0 1040.0L871.2 1040.0L872.5 1040.2L873.8 1040.4L875.0 1041.9L876.2 1041.6L877.5 1043.3L878.8 1042.6L880.0 1042.6L881.2 1043.9L882.5 1045.0L883.8 1043.2L885.0 1044.0L886.2 1044.0L887.5 1040.3L888.8 1042.9L890.0 1043.2L891.2 1044.1L892.5 1043.7L893.8 1045.4L895.0 1045.1L896.2 1043.8L897.5 1045.0L898.8 1045.7L900.0 1044.6L901.2 1043.0L902.5 1040.9L903.8 1039.6L905.0 1041.8L906.2 1042.2L907.5 1040.6L908.8 1042.0L910.0 1041.7L911.2 1044.1L912.5 1044.2L913.8 1046.0L915.0 1045.4L916.2 1046.1L917.5 1049.4L918.8 1050.3L920.0 1044.1L921.2 1042.1L922.5 1043.8L923.8 1044.0L925.0 1043.2L926.2 1041.0L927.5 1042.0L928.8 1041.1L930.0 1041.2L931.2 1040.4L932.5 1040.1L933.8 1036.1L935.0 1036.5L936.2 1039.1L937.5 1039.1L938.8 1039.2L940.0 1041.7L941.2 1038.0L942.5 1040.8L943.8 1042.8L945.0 1045.9L946.2 1045.0L947.5 1044.4L948.8 1043.2L950.0 1043.0L951.2 1041.7L952.5 1038.9L953.8 1038.1L955.0 1040.2L956.2 1038.1L957.5 1036.2L958.8 1035.5L960.0 1035.4L961.2 1034.1L962.5 1031.5L963.8 1029.8L965.0 1032.7L966.2 1032.0L967.5 1031.0L968.8 1032.8L970.0 1031.2L971.2 1034.2L972.5 1037.4L973.8 1035.6L975.0 1040.0L976.2 1039.9L977.5 1040.8L978.8 1044.9L980.0 1044.4L981.2 1043.7L982.5 1045.5L983.8 1047.1L985.0 1045.6L986.2 1049.1L987.5 1050.0L988.8 1050.4L990.0 1051.4L991.2 1048.5L992.5 1048.5L993.8 1048.4L995.0 1048.9L996.2 1048.3L997.5 1046.9L998.8 1044.3L1000.0 1045.0L1001.2 1043.8L1002.5 1043.4L1003.8 1044.6L1005.0 1046.8L1006.2 1048.1L1007.5 1047.5L1008.8 1044.3L1010.0 1047.2L1011.2 1046.3L1012.5 1047.5L1013.8 1046.6L1015.0 1046.1L1016.2 1045.4L1017.5 1045.8L1018.8 1045.2L1020.0 1046.4L1021.2 1046.8L1022.5 1047.3L1023.8 1048.3L1025.0 1047.9L1026.2 1042.3L1027.5 1043.7L1028.8 1040.7L1030.0 1040.6L1031.2 1039.9L1032.5 1035.7L1033.8 1035.8L1035.0 1038.1L1036.2 1040.2L1037.5 1043.9L1038.8 1045.6L1040.0 1047.2L1041.2 1049.5L1042.5 1050.3L1043.8 1049.6L1045.0 1048.3L1046.2 1047.7L1047.5 1048.3L1048.8 1046.3L1050.0 1048.0L1051.2 1048.1L1052.5 1047.4L1053.8 1045.6L1055.0 1047.0L1056.2 1047.1L1057.5 1046.9L1058.8 1049.9L1060.0 1047.2L1061.2 1048.2L1062.5 1044.5L1063.8 1044.3L1065.0 1044.3L1066.2 1044.5L1067.5 1043.3L1068.8 1043.7L1070.0 1039.5L1071.2 1042.1L1072.5 1045.2L1073.8 1046.9L1075.0 1046.2L1076.2 1046.3L1077.5 1045.6L1078.8 1046.0L1080.0 1046.1L1081.2 1045.3L1082.5 1046.4L1083.8 1046.9L1085.0 1044.5L1086.2 1043.6L1087.5 1046.1L1088.8 1045.2L1090.0 1045.5L1091.2 1047.9L1092.5 1048.8L1093.8 1046.3L1095.0 1046.5L1096.2 1047.8L1097.5 1048.8L1098.8 1049.9L1100.0 1048.3L1101.2 1046.4L1102.5 1045.4L1103.8 1043.5L1105.0 1043.6L1106.2 1042.3L1107.5 1044.3L1108.8 1041.7L1110.0 1046.4L1111.2 1046.3L1112.5 1048.5L1113.8 1050.0L1115.0 1051.0L1116.2 1046.9L1117.5 1051.1L1118.8 1052.4L1120.0 1050.2L1121.2 1047.1L1122.5 1042.0L1123.8 1043.6L1125.0 1043.7L1126.2 1045.0L1127.5 1045.3L1128.8 1042.0L1130.0 1042.7L1131.2 1044.1L1132.5 1045.9L1133.8 1045.7L1135.0 1046.7L1136.2 1047.0L1137.5 1046.7L1138.8 1044.7L1140.0 1044.8L1141.2 1045.7L1142.5 1045.4L1143.8 1045.0L1145.0 1044.5L1146.2 1043.5L1147.5 1044.6L1148.8 1046.5L1150.0 1049.8L1151.2 1049.2L1152.5 1048.1L1153.8 1047.6L1155.0 1046.5L1156.2 1045.1L1157.5 1044.2L1158.8 1043.7L1160.0 1042.1L1161.2 1041.3L1162.5 1040.2L1163.8 1041.2L1165.0 1037.8L1166.2 1039.3L1167.5 1040.0L1168.8 1041.6L1170.0 1038.7L1171.2 1040.6L1172.5 1042.4L1173.8 1044.2L1175.0 1041.4L1176.2 1041.6L1177.5 1043.0L1178.8 1040.7L1180.0 1039.1L1181.2 1042.1L1182.5 1045.4L1183.8 1046.0L1185.0 1048.1L1186.2 1050.2L1187.5 1051.6L1188.8 1050.1L1190.0 1046.0L1191.2 1048.6L1192.5 1046.7L1193.8 1046.7L1195.0 1046.9L1196.2 1045.0L1197.5 1046.5L1198.8 1045.6L1200.0 1047.1L1201.2 1047.4L1202.5 1047.0L1203.8 1047.2L1205.0 1048.1L1206.2 1045.0L1207.5 1045.2L1208.8 1043.1L1210.0 1042.9L1211.2 1040.0L1212.5 1041.2L1213.8 1039.4L1215.0 1037.9L1216.2 1038.1L1217.5 1039.0L1218.8 1039.4L1220.0 1040.6L1221.2 1042.3L1222.5 1040.7L1223.8 1041.2L1225.0 1041.3L1226.2 1040.0L1227.5 1042.9L1228.8 1043.4L1230.0 1044.0L1231.2 1043.6L1232.5 1040.8L1233.8 1043.8L1235.0 1043.2L1236.2 1041.3L1237.5 1042.3L1238.8 1041.8L1240.0 1043.6L1241.2 1045.7L1242.5 1046.6L1243.8 1045.8L1245.0 1049.0L1246.2 1051.0L1247.5 1049.6L1248.8 1050.6L1250.0 1050.7L1251.2 1048.1L1252.5 1044.4L1253.8 1045.1L1255.0 1045.3L1256.2 1042.3L1257.5 1043.8L1258.8 1041.6L1260.0 1044.7L1261.2 1043.4L1262.5 1046.1L1263.8 1047.6L1265.0 1050.4L1266.2 1045.1L1267.5 1045.3L1268.8 1046.9L1270.0 1045.8L1271.2 1047.1L1272.5 1045.9L1273.8 1044.6L1275.0 1044.1L1276.2 1045.9L1277.5 1047.6L1278.8 1046.0L1280.0 1045.8L1281.2 1048.9L1282.5 1043.9L1283.8 1047.6L1285.0 1045.5L1286.2 1047.3L1287.5 1043.3L1288.8 1043.3L1290.0 1043.5L1291.2 1040.6L1292.5 1043.2L1293.8 1040.8L1295.0 1044.0L1296.2 1045.4L1297.5 1048.8L1298.8 1050.9L1300.0 1052.6L1301.2 1051.4L1302.5 1048.3L1303.8 1049.9L1305.0 1052.6L1306.2 1051.0L1307.5 1048.3L1308.8 1043.7L1310.0 1044.2L1311.2 1047.1L1312.5 1047.6L1313.8 1048.9L1315.0 1052.4L1316.2 1053.0L1317.5 1051.6L1318.8 1052.8L1320.0 1053.4L1321.2 1052.3L1322.5 1047.9L1323.8 1043.2L1325.0 1037.6L1326.2 1036.7L1327.5 1038.7L1328.8 1039.2L1330.0 1042.1L1331.2 1042.5L1332.5 1043.8L1333.8 1045.5L1335.0 1045.5L1336.2 1046.6L1337.5 1043.9L1338.8 1047.0L1340.0 1041.0L1341.2 1042.5L1342.5 1041.7L1343.8 1039.3L1345.0 1039.0L1346.2 1039.5L1347.5 1035.9L1348.8 1035.2L1350.0 1036.4L1351.2 1034.1L1352.5 1035.2L1353.8 1037.7L1355.0 1037.4L1356.2 1037.1L1357.5 1035.1L1358.8 1035.3L1360.0 1033.2L1361.2 1032.8L1362.5 1037.0L1363.8 1035.7L1365.0 1039.9L1366.2 1044.2L1367.5 1044.8L1368.8 1043.1L1370.0 1042.9L1371.2 1041.7L1372.5 1042.1L1373.8 1038.6L1375.0 1039.0L1376.2 1039.4L1377.5 1041.8L1378.8 1042.2L1380.0 1038.1L1381.2 1042.6L1382.5 1043.4L1383.8 1043.8L1385.0 1045.6L1386.2 1045.7L1387.5 1040.2L1388.8 1042.0L1390.0 1041.8L1391.2 1039.9L1392.5 1040.1L1393.8 1038.3L1395.0 1038.3L1396.2 1037.6L1397.5 1041.0L1398.8 1040.2L1400.0 1042.9L1401.2 1043.2L1402.5 1043.9L1403.8 1041.8L1405.0 1043.4L1406.2 1041.1L1407.5 1041.3L1408.8 1041.6L1410.0 1040.5L1411.2 1037.1L1412.5 1038.4L1413.8 1037.7L1415.0 1038.0L1416.2 1037.4L1417.5 1035.4L1418.8 1036.4L1420.0 1030.2L1421.2 1032.5L1422.5 1036.6L1423.8 1038.2L1425.0 1039.0L1426.2 1042.2L1427.5 1045.5L1428.8 1047.7L1430.0 1048.1L1431.2 1047.9L1432.5 1047.8L1433.8 1049.8L1435.0 1048.7L1436.2 1046.2L1437.5 1047.5L1438.8 1045.8L1440.0 1047.4L1441.2 1046.0L1442.5 1044.4L1443.8 1044.5L1445.0 1047.1L1446.2 1047.9L1447.5 1048.9L1448.8 1051.3L1450.0 1053.0L1451.2 1052.1L1452.5 1054.3L1453.8 1053.4L1455.0 1050.3L1456.2 1049.4L1457.5 1045.1L1458.8 1041.7L1460.0 1042.6L1461.2 1038.8L1462.5 1041.4L1463.8 1043.4L1465.0 1044.4L1466.2 1044.3L1467.5 1045.0L1468.8 1042.2L1470.0 1044.9L1471.2 1045.3L1472.5 1044.7L1473.8 1044.6L1475.0 1045.8L1476.2 1042.7L1477.5 1041.3L1478.8 1040.4L1480.0 1039.4L1481.2 1032.6L1482.5 1036.2L1483.8 1034.9L1485.0 1035.4L1486.2 1034.4L1487.5 1035.1L1488.8 1032.4L1490.0 1039.4L1491.2 1041.8L1492.5 1040.8L1493.8 1036.4L1495.0 1033.5L1496.2 1036.6L1497.5 1039.0L1498.8 1043.1L1500.0 1045.3L1501.2 1043.7L1502.5 1043.7L1503.8 1042.1L1505.0 1039.4L1506.2 1034.4L1507.5 1036.4L1508.8 1035.2L1510.0 1033.2L1511.2 1031.6L1512.5 1030.4L1513.8 1035.1L1515.0 1038.1L1516.2 1039.1L1517.5 1039.4L1518.8 1041.2L1520.0 1040.7L1521.2 1041.1L1522.5 1037.7L1523.8 1038.8L1525.0 1037.2L1526.2 1035.5L1527.5 1036.3L1528.8 1036.2L1530.0 1038.5L1531.2 1042.6L1532.5 1045.3L1533.8 1045.7L1535.0 1042.4L1536.2 1043.5L1537.5 1041.2L1538.8 1040.8L1540.0 1040.3L1541.2 1037.6L1542.5 1040.4L1543.8 1039.8L1545.0 1043.1L1546.2 1041.8L1547.5 1042.0L1548.8 1043.2L1550.0 1040.1L1551.2 1041.2L1552.5 1042.7L1553.8 1042.1L1555.0 1040.4L1556.2 1041.2L1557.5 1040.2L1558.8 1042.5L1560.0 1043.4L1561.2 1045.1L1562.5 1042.2L1563.8 1046.1L1565.0 1047.5L1566.2 1044.6L1567.5 1045.4L1568.8 1047.6L1570.0 1044.0L1571.2 1046.0L1572.5 1046.2L1573.8 1044.9L1575.0 1043.4L1576.2 1045.5L1577.5 1047.9L1578.8 1048.9L1580.0 1050.7L1581.2 1051.3L1582.5 1051.0L1583.8 1053.1L1585.0 1051.6L1586.2 1048.4L1587.5 1051.6L1588.8 1043.4L1590.0 1036.7L1591.2 1036.7L1592.5 1036.8L1593.8 1037.9L1595.0 1036.1L1596.2 1037.9L1597.5 1039.1L1598.8 1039.7L1600.0 1042.1L1601.2 1043.5L1602.5 1043.6L1603.8 1042.7L1605.0 1043.1L1606.2 1039.7L1607.5 1037.9L1608.8 1034.7L1610.0 1030.4L1611.2 1034.8L1612.5 1033.6L1613.8 1036.1L1615.0 1038.4L1616.2 1041.5L1617.5 1043.2L1618.8 1039.5L1620.0 1041.2L1621.2 1040.8L1622.5 1039.1L1623.8 1039.0L1625.0 1040.2L1626.2 1039.0L1627.5 1041.6L1628.8 1042.0L1630.0 1044.1L1631.2 1045.9L1632.5 1045.0L1633.8 1043.0L1635.0 1041.1L1636.2 1041.3L1637.5 1036.1L1638.8 1035.5L1640.0 1031.9L1641.2 1032.2L1642.5 1032.0L1643.8 1033.4L1645.0 1036.0L1646.2 1037.1L1647.5 1039.5L1648.8 1036.1L1650.0 1036.1L1651.2 1038.0L1652.5 1040.0L1653.8 1040.3L1655.0 1041.8L1656.2 1042.2L1657.5 1042.5L1658.8 1040.4L1660.0 1041.2L1661.2 1042.1L1662.5 1043.9L1663.8 1043.1L1665.0 1042.0L1666.2 1044.6L1667.5 1044.8L1668.8 1045.6L1670.0 1046.6L1671.2 1048.4L1672.5 1047.9L1673.8 1049.3L1675.0 1049.1L1676.2 1052.3L1677.5 1050.9L1678.8 1049.9L1680.0 1049.1L1681.2 1048.0L1682.5 1046.9L1683.8 1045.9L1685.0 1045.2L1686.2 1046.0L1687.5 1046.4L1688.8 1046.5L1690.0 1046.7L1691.2 1047.1L1692.5 1048.9L1693.8 1050.3L1695.0 1049.5L1696.2 1045.5L1697.5 1046.4L1698.8 1048.5L1700.0 1047.2L1701.2 1046.0L1702.5 1045.9L1703.8 1043.1L1705.0 1045.6L1706.2 1047.0L1707.5 1048.4L1708.8 1048.8L1710.0 1049.4L1711.2 1051.4L1712.5 1052.0L1713.8 1048.6L1715.0 1052.2L1716.2 1049.1L1717.5 1049.4L1718.8 1050.6L1720.0 1050.2L1721.2 1051.9L1722.5 1052.7L1723.8 1052.3L1725.0 1052.3L1726.2 1054.6L1727.5 1055.7L1728.8 1055.7L1730.0 1053.4L1731.2 1053.3L1732.5 1053.8L1733.8 1055.0L1735.0 1055.7L1736.2 1053.5L1737.5 1054.6L1738.8 1056.7L1740.0 1056.6L1741.2 1052.4L1742.5 1048.4L1743.8 1042.1L1745.0 1043.1L1746.2 1041.7L1747.5 1045.7L1748.8 1048.4L1750.0 1050.5L1751.2 1053.8L1752.5 1050.1L1753.8 1052.4L1755.0 1052.5L1756.2 1053.7L1757.5 1052.3L1758.8 1051.2L1760.0 1048.8L1761.2 1047.0L1762.5 1045.4L1763.8 1042.7L1765.0 1037.9L1766.2 1042.8L1767.5 1046.3L1768.8 1046.8L1770.0 1051.7L1771.2 1051.8L1772.5 1053.6L1773.8 1054.2L1775.0 1054.0L1776.2 1052.3L1777.5 1053.5L1778.8 1054.6L1780.0 1052.2L1781.2 1051.6L1782.5 1050.7L1783.8 1050.2L1785.0 1049.6L1786.2 1048.7L1787.5 1044.0L1788.8 1040.8L1790.0 1035.8L1791.2 1039.4L1792.5 1044.7L1793.8 1047.2L1795.0 1051.7L1796.2 1053.9L1797.5 1053.9L1798.8 1048.4L1800.0 1051.1L1801.2 1052.4L1802.5 1052.4L1803.8 1046.3L1805.0 1047.7L1806.2 1045.7L1807.5 1045.7L1808.8 1043.1L1810.0 1042.3L1811.2 1043.4L1812.5 1044.3L1813.8 1044.2L1815.0 1047.6L1816.2 1051.6L1817.5 1055.1L1818.8 1056.2L1820.0 1056.4L1821.2 1058.6L1822.5 1059.3L1823.8 1048.5L1825.0 1039.8L1826.2 1036.1L1827.5 1036.0L1828.8 1037.3L1830.0 1036.4L1831.2 1039.0L1832.5 1041.1L1833.8 1043.8L1835.0 1042.8L1836.2 1040.9L1837.5 1040.5L1838.8 1038.3L1840.0 1040.3L1841.2 1040.4L1842.5 1042.4L1843.8 1038.0L1845.0 1039.9L1846.2 1040.1L1847.5 1042.2L1848.8 1042.3L1850.0 1041.7L1851.2 1036.9L1852.5 1038.7L1853.8 1039.6L1855.0 1038.4L1856.2 1040.6L1857.5 1039.2L1858.8 1040.1L1860.0 1037.3L1861.2 1038.6L1862.5 1042.1L1863.8 1041.4L1865.0 1041.9L1866.2 1043.5L1867.5 1043.8L1868.8 1043.3L1870.0 1040.9L1871.2 1039.8L1872.5 1039.5L1873.8 1039.9L1875.0 1039.1L1876.2 1040.6L1877.5 1035.9L1878.8 1037.5L1880.0 1038.5L1881.2 1037.8L1882.5 1039.8L1883.8 1042.0L1885.0 1040.9L1886.2 1043.1L1887.5 1040.2L1888.8 1038.7L1890.0 1035.9L1891.2 1036.4L1892.5 1038.4L1893.8 1039.9L1895.0 1041.1L1896.2 1036.8L1897.5 1040.8L1898.8 1043.3L1900.0 1045.7L1901.2 1045.5L1902.5 1048.6L1903.8 1048.3L1905.0 1051.4L1906.2 1050.5L1907.5 1052.7L1908.8 1053.8L1910.0 1055.9L1911.2 1058.5L1912 1059.2L1927 1059.2L1927 1060.6Z" fill="#c4d4c6"/></svg>
<svg style="left:1978px;top:842.4px;" width="16" height="20" viewBox="0 0 16 20"><path d="M0.4 0.4 H15.2 V12.6 L7.8 19.6 L0.4 12.6 Z" fill="#a6a6a6"/></svg>
<svg style="left:1974px;top:871.4px;" width="20" height="18" viewBox="0 0 20 18"><path d="M9.6 1 L1 10.6 H7" fill="none" stroke="#b0b0b0" stroke-width="1.4"/><rect x="9.4" y="5" width="9.8" height="8.4" fill="#b0b0b0"/><circle cx="8" cy="13.4" r="3.3" fill="#2a2a2a" stroke="#b0b0b0" stroke-width="1.4"/></svg>
<svg style="left:0;top:0" width="800" height="1228" viewBox="0 0 800 1228"><rect x="778" y="836" width="1.45" height="365" fill="#2d8ceb"/></svg>
<svg style="left:769.4px;top:817.8px;" width="19" height="19" viewBox="0 0 19 19"><path d="M0.3 0.2 H17.5 V8 L9 18.8 L0.3 8 Z" fill="#2d8ceb"/><path d="M9 9.6 V18.6" stroke="#9a9a9a" stroke-width="0.9"/><path d="M6.8 9.4 H11.2" stroke="#1f4a78" stroke-width="0.9"/></svg>
<svg style="left:774.3px;top:897px;" width="9" height="16" viewBox="0 0 9 16"><path d="M0.2 0.9 H8.6 M0.2 15.1 H8.6" stroke="#c4c4c4" stroke-width="1.5" fill="none"/><path d="M4.4 0.9 V15.1" stroke="#c8c8c8" stroke-width="1.7" fill="none"/></svg>
<svg style="left:774.3px;top:921px;" width="9" height="16" viewBox="0 0 9 16"><path d="M0.2 0.9 H8.6 M0.2 15.1 H8.6" stroke="#c4c4c4" stroke-width="1.5" fill="none"/><path d="M4.4 0.9 V15.1" stroke="#c8c8c8" stroke-width="1.7" fill="none"/></svg>
<div style="left:921px;top:1199.6px;width:1052px;height:28.4px;background:#212121;"></div>
<div style="left:2px;top:1202.4px;width:919px;height:25.6px;background:#272727;"></div>
<div style="left:0px;top:1200.9px;width:921px;height:1.7px;background:#0b0b0b;"></div>
<div style="left:1973px;top:1201px;width:24px;height:24.5px;background:#282828;"></div>
<div style="left:766px;top:1202px;width:1.6px;height:26px;background:#161616;"></div>
<div style="left:9.4px;top:1203.6px;width:23.2px;height:21.8px;background:#242424;border:1px solid #303030;border-radius:2px;"></div>
<svg style="left:12.4px;top:1206.4px;" width="18" height="17" viewBox="0 0 18 17"><g fill="#242424" stroke="#2d8ceb" stroke-width="1.5"><rect x="0.8" y="0.8" width="9" height="9" rx="1.6"/><rect x="3.8" y="3.6" width="9" height="9" rx="1.6"/><rect x="6.8" y="6.6" width="9" height="9" rx="1.6"/></g><circle cx="11.3" cy="11.1" r="1.7" fill="#2d8ceb"/></svg>
<svg style="left:40px;top:1205.4px;" width="17" height="16" viewBox="0 0 17 16"><circle cx="6" cy="6" r="5.2" fill="none" stroke="#b2b2b2" stroke-width="1.4"/><rect x="6.6" y="6.6" width="9" height="8.4" fill="none" stroke="#b2b2b2" stroke-width="1.4"/><path d="M6.6 6.6 H11.2 A5.2 5.2 0 0 1 6.6 11.2 Z" fill="#b2b2b2"/></svg>
<svg style="left:67px;top:1205.4px;" width="17" height="16" viewBox="0 0 17 16"><rect x="5.6" y="0.4" width="5.4" height="15" fill="#4a4a4a"/><path d="M6 0.7 C3.6 0.7 4.2 3 4.2 5 C4.2 7 3 7.6 0.8 7.8 C3 8 4.2 8.6 4.2 10.6 C4.2 12.6 3.6 14.9 6 14.9 M10.6 0.7 C13 0.7 12.4 3 12.4 5 C12.4 7 13.6 7.6 15.8 7.8 C13.6 8 12.4 8.6 12.4 10.6 C12.4 12.6 13 14.9 10.6 14.9" fill="none" stroke="#b2b2b2" stroke-width="1.5"/></svg>
<svg style="left:93.4px;top:1206.6px;" width="19" height="15" viewBox="0 0 19 15"><circle cx="6.6" cy="6" r="5.6" fill="#b2b2b2"/><path d="M0.4 13 H16.6 V11.4 H13 C13.6 10 14.2 8.6 15 7.6 L12.6 6.6 C12.4 8.6 11.4 10.4 10 11.4 H0.4 Z" fill="#b2b2b2"/><path d="M13 8 L13.6 2.6 M14.6 8.6 L17.6 3.4" stroke="#b2b2b2" stroke-width="1"/><circle cx="13.6" cy="2.4" r="1" fill="#b2b2b2"/><circle cx="17.8" cy="3.2" r="1" fill="#b2b2b2"/></svg>
<span class="t" style="left:151.54px;top:1204.58px;font-size:16px;line-height:20px;color:#bdbdbd;transform:scaleX(0.9707);transform-origin:0 0;">Frame Render Time</span>
<span class="t" style="left:296.724px;top:1204.57px;font-size:14.6px;line-height:20px;color:#5fd6b3;font-weight:bold;transform:scaleX(1.0766);transform-origin:0 0;">0ms</span>
<div style="left:382.5px;top:1204.2px;width:191.6px;height:21.4px;background:#242424;border:1px solid #3a3a3a;border-radius:2px;"></div>
<span class="t" style="left:390.04px;top:1204.78px;font-size:16px;line-height:20px;color:#b6b6b6;transform:scaleX(0.9922);transform-origin:0 0;">Toggle Switches / Modes</span>
<svg style="left:775px;top:1209px;" width="15" height="8" viewBox="0 0 15 8"><path d="M0.2 7.4 L3.6 3.6 L5.4 5.4 L9.4 0.6 L14.6 7.4 Z" fill="#b2b2b2"/></svg>
<div style="left:818px;top:1213.2px;width:56px;height:2px;background:#3e3e3e;border-radius:1px;"></div>
<div style="left:805px;top:1208px;width:15.4px;height:15.4px;background:#272727;border:3px solid #8e8e8e;border-radius:50%;"></div>
<svg style="left:890px;top:1208px;" width="25" height="11" viewBox="0 0 25 11"><path d="M0.4 10 L6.4 3.4 L8.6 3.4 L3.4 10 Z" fill="#b2b2b2"/><path d="M5.6 10 L14.6 0.6 L24.2 10 Z" fill="#b2b2b2"/></svg>
<div style="left:0px;top:1225.2px;width:1999px;height:2.8px;background:#1a1a1a;"></div>
<div style="left:1997px;top:36px;width:2px;height:1192px;background:#1a1a1a;"></div>
<svg style="left:0;top:1216px" width="12" height="12" viewBox="0 0 12 12"><path d="M0 0 V12 H12 C4 12 0 8 0 0 Z" fill="#050505"/></svg>
<svg style="left:1987px;top:1216px" width="12" height="12" viewBox="0 0 12 12"><path d="M12 0 V12 H0 C8 12 12 8 12 0 Z" fill="#0a0807"/></svg>
</div></body></html>
